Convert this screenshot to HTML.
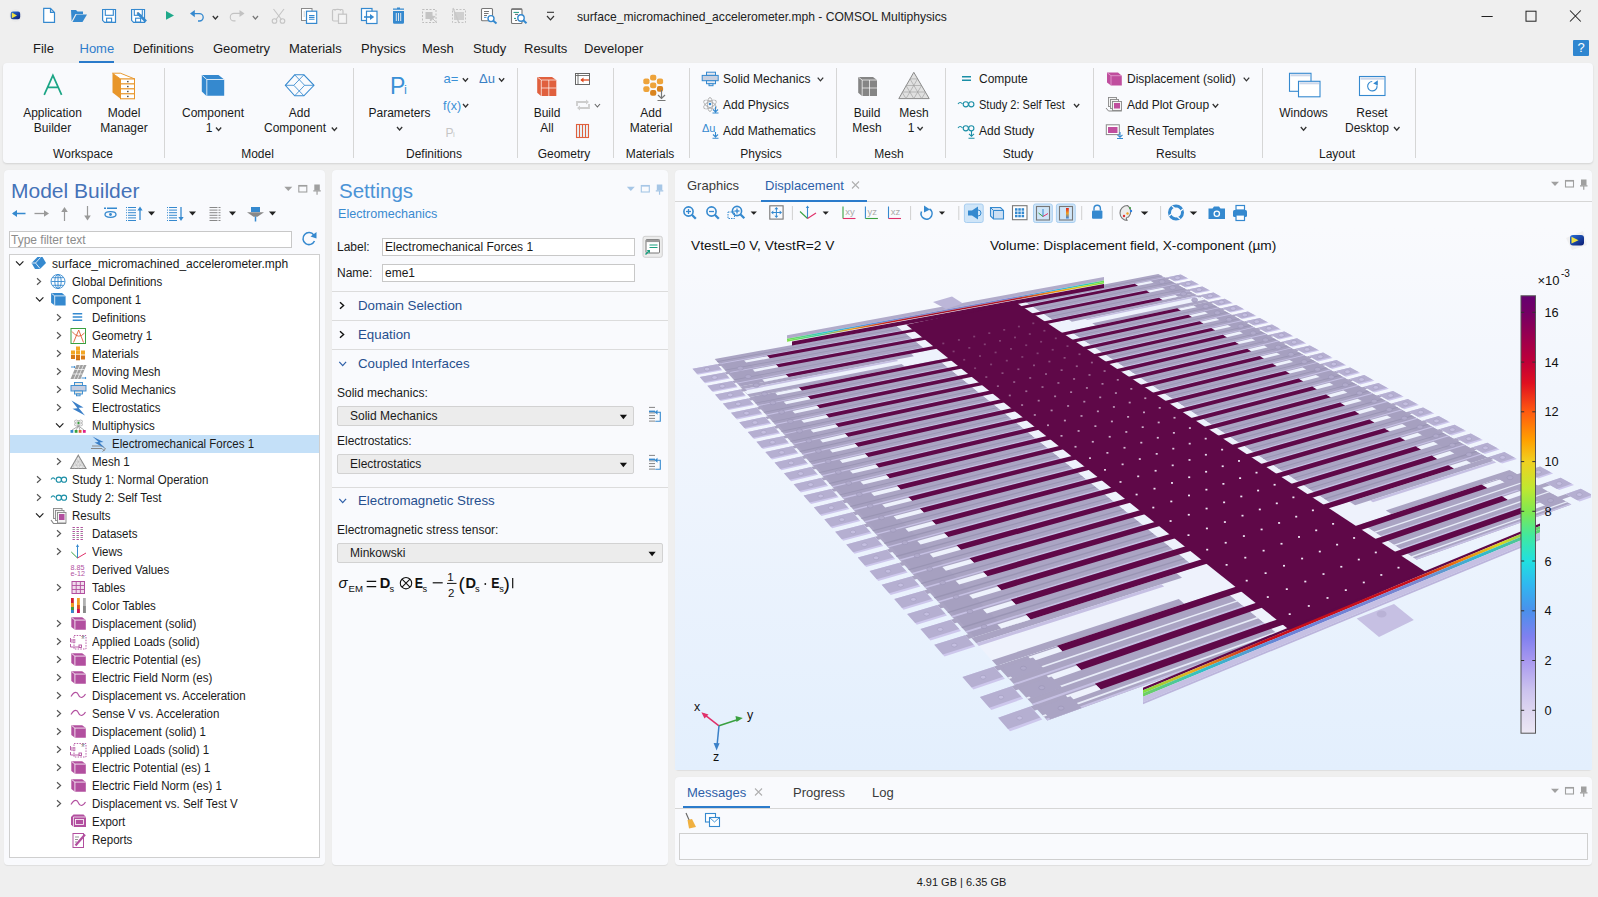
<!DOCTYPE html><html><head><meta charset="utf-8"><style>
*{margin:0;padding:0;box-sizing:border-box}
html,body{width:1598px;height:897px;overflow:hidden;background:#efefef;font-family:"Liberation Sans",sans-serif;position:relative}
.t{position:absolute;white-space:nowrap;overflow:visible}
.a{position:absolute}
.panel{position:absolute;background:#f9fafd;border-radius:4px;box-shadow:0 0.5px 1px rgba(0,0,0,0.07)}
svg{position:absolute;overflow:visible}
</style></head><body>
<div class="t" style="left:577px;top:10.76px;font-size:12.1px;line-height:12.1px;height:16.1px;color:#222;">surface_micromachined_accelerometer.mph - COMSOL Multiphysics</div>
<div class="t" style="left:33px;top:42.00px;font-size:13px;line-height:13px;height:17px;color:#1a1a1a;">File</div>
<div class="t" style="left:79.5px;top:42.00px;font-size:13px;line-height:13px;height:17px;color:#2f7dcc;">Home</div>
<div class="t" style="left:133px;top:42.00px;font-size:13px;line-height:13px;height:17px;color:#1a1a1a;">Definitions</div>
<div class="t" style="left:213px;top:42.00px;font-size:13px;line-height:13px;height:17px;color:#1a1a1a;">Geometry</div>
<div class="t" style="left:289px;top:42.00px;font-size:13px;line-height:13px;height:17px;color:#1a1a1a;">Materials</div>
<div class="t" style="left:361px;top:42.00px;font-size:13px;line-height:13px;height:17px;color:#1a1a1a;">Physics</div>
<div class="t" style="left:422px;top:42.00px;font-size:13px;line-height:13px;height:17px;color:#1a1a1a;">Mesh</div>
<div class="t" style="left:473px;top:42.00px;font-size:13px;line-height:13px;height:17px;color:#1a1a1a;">Study</div>
<div class="t" style="left:524px;top:42.00px;font-size:13px;line-height:13px;height:17px;color:#1a1a1a;">Results</div>
<div class="t" style="left:584px;top:42.00px;font-size:13px;line-height:13px;height:17px;color:#1a1a1a;">Developer</div>
<div class="a" style="left:79px;top:61px;width:35px;height:2px;background:#2b7bcb"></div>
<div class="a" style="left:1573px;top:40px;width:16px;height:16px;background:#2f86d0;border-radius:1px;color:#fff;font-size:13px;line-height:16px;text-align:center">?</div>
<div class="panel" style="left:3px;top:63px;width:1590px;height:100px;box-shadow:0 1px 2px rgba(0,0,0,0.12)"></div>
<div class="a" style="left:164px;top:68px;width:1px;height:90px;background:#d6d6d6"></div>
<div class="a" style="left:353px;top:68px;width:1px;height:90px;background:#d6d6d6"></div>
<div class="a" style="left:517px;top:68px;width:1px;height:90px;background:#d6d6d6"></div>
<div class="a" style="left:613px;top:68px;width:1px;height:90px;background:#d6d6d6"></div>
<div class="a" style="left:689px;top:68px;width:1px;height:90px;background:#d6d6d6"></div>
<div class="a" style="left:836px;top:68px;width:1px;height:90px;background:#d6d6d6"></div>
<div class="a" style="left:945px;top:68px;width:1px;height:90px;background:#d6d6d6"></div>
<div class="a" style="left:1093px;top:68px;width:1px;height:90px;background:#d6d6d6"></div>
<div class="a" style="left:1262px;top:68px;width:1px;height:90px;background:#d6d6d6"></div>
<div class="a" style="left:1415px;top:68px;width:1px;height:90px;background:#d6d6d6"></div>
<div class="t" style="left:23.0px;width:120px;text-align:center;top:147.84px;font-size:12px;line-height:12px;height:16px;color:#1a1a1a;">Workspace</div>
<div class="t" style="left:197.5px;width:120px;text-align:center;top:147.84px;font-size:12px;line-height:12px;height:16px;color:#1a1a1a;">Model</div>
<div class="t" style="left:374.0px;width:120px;text-align:center;top:147.84px;font-size:12px;line-height:12px;height:16px;color:#1a1a1a;">Definitions</div>
<div class="t" style="left:504.0px;width:120px;text-align:center;top:147.84px;font-size:12px;line-height:12px;height:16px;color:#1a1a1a;">Geometry</div>
<div class="t" style="left:590.0px;width:120px;text-align:center;top:147.84px;font-size:12px;line-height:12px;height:16px;color:#1a1a1a;">Materials</div>
<div class="t" style="left:701.0px;width:120px;text-align:center;top:147.84px;font-size:12px;line-height:12px;height:16px;color:#1a1a1a;">Physics</div>
<div class="t" style="left:829.0px;width:120px;text-align:center;top:147.84px;font-size:12px;line-height:12px;height:16px;color:#1a1a1a;">Mesh</div>
<div class="t" style="left:958.0px;width:120px;text-align:center;top:147.84px;font-size:12px;line-height:12px;height:16px;color:#1a1a1a;">Study</div>
<div class="t" style="left:1116.0px;width:120px;text-align:center;top:147.84px;font-size:12px;line-height:12px;height:16px;color:#1a1a1a;">Results</div>
<div class="t" style="left:1277.0px;width:120px;text-align:center;top:147.84px;font-size:12px;line-height:12px;height:16px;color:#1a1a1a;">Layout</div>
<div class="t" style="left:-7.5px;width:120px;text-align:center;top:106.84px;font-size:12px;line-height:12px;height:16px;color:#1a1a1a;">Application</div>
<div class="t" style="left:-7.5px;width:120px;text-align:center;top:121.84px;font-size:12px;line-height:12px;height:16px;color:#1a1a1a;">Builder</div>
<div class="t" style="left:64.0px;width:120px;text-align:center;top:106.84px;font-size:12px;line-height:12px;height:16px;color:#1a1a1a;">Model</div>
<div class="t" style="left:64.0px;width:120px;text-align:center;top:121.84px;font-size:12px;line-height:12px;height:16px;color:#1a1a1a;">Manager</div>
<div class="t" style="left:153.0px;width:120px;text-align:center;top:106.84px;font-size:12px;line-height:12px;height:16px;color:#1a1a1a;">Component</div>
<div class="t" style="left:149.0px;width:120px;text-align:center;top:121.84px;font-size:12px;line-height:12px;height:16px;color:#1a1a1a;">1</div>
<div class="t" style="left:239.5px;width:120px;text-align:center;top:106.84px;font-size:12px;line-height:12px;height:16px;color:#1a1a1a;">Add</div>
<div class="t" style="left:235.0px;width:120px;text-align:center;top:121.84px;font-size:12px;line-height:12px;height:16px;color:#1a1a1a;">Component</div>
<div class="t" style="left:339.5px;width:120px;text-align:center;top:106.84px;font-size:12px;line-height:12px;height:16px;color:#1a1a1a;">Parameters</div>
<div class="t" style="left:-60.0px;width:120px;text-align:center;top:121.84px;font-size:12px;line-height:12px;height:16px;color:#1a1a1a;"></div>
<div class="t" style="left:487.0px;width:120px;text-align:center;top:106.84px;font-size:12px;line-height:12px;height:16px;color:#1a1a1a;">Build</div>
<div class="t" style="left:487.0px;width:120px;text-align:center;top:121.84px;font-size:12px;line-height:12px;height:16px;color:#1a1a1a;">All</div>
<div class="t" style="left:591.0px;width:120px;text-align:center;top:106.84px;font-size:12px;line-height:12px;height:16px;color:#1a1a1a;">Add</div>
<div class="t" style="left:591.0px;width:120px;text-align:center;top:121.84px;font-size:12px;line-height:12px;height:16px;color:#1a1a1a;">Material</div>
<div class="t" style="left:807.0px;width:120px;text-align:center;top:106.84px;font-size:12px;line-height:12px;height:16px;color:#1a1a1a;">Build</div>
<div class="t" style="left:807.0px;width:120px;text-align:center;top:121.84px;font-size:12px;line-height:12px;height:16px;color:#1a1a1a;">Mesh</div>
<div class="t" style="left:854.0px;width:120px;text-align:center;top:106.84px;font-size:12px;line-height:12px;height:16px;color:#1a1a1a;">Mesh</div>
<div class="t" style="left:851.0px;width:120px;text-align:center;top:121.84px;font-size:12px;line-height:12px;height:16px;color:#1a1a1a;">1</div>
<div class="t" style="left:1243.5px;width:120px;text-align:center;top:106.84px;font-size:12px;line-height:12px;height:16px;color:#1a1a1a;">Windows</div>
<div class="t" style="left:-60.0px;width:120px;text-align:center;top:121.84px;font-size:12px;line-height:12px;height:16px;color:#1a1a1a;"></div>
<div class="t" style="left:1312.0px;width:120px;text-align:center;top:106.84px;font-size:12px;line-height:12px;height:16px;color:#1a1a1a;">Reset</div>
<div class="t" style="left:1307.0px;width:120px;text-align:center;top:121.84px;font-size:12px;line-height:12px;height:16px;color:#1a1a1a;">Desktop</div>
<div class="t" style="left:723px;top:73.34px;font-size:12px;line-height:12px;height:16px;color:#1a1a1a;">Solid Mechanics</div>
<div class="t" style="left:723px;top:99.34px;font-size:12px;line-height:12px;height:16px;color:#1a1a1a;">Add Physics</div>
<div class="t" style="left:723px;top:125.34px;font-size:12px;line-height:12px;height:16px;color:#1a1a1a;">Add Mathematics</div>
<div class="t" style="left:979px;top:73.34px;font-size:12px;line-height:12px;height:16px;color:#1a1a1a;">Compute</div>
<div class="t" style="left:979px;top:99.34px;font-size:12px;line-height:12px;height:16px;color:#1a1a1a;transform:scaleX(0.92);transform-origin:0 0;">Study 2: Self Test</div>
<div class="t" style="left:979px;top:125.34px;font-size:12px;line-height:12px;height:16px;color:#1a1a1a;">Add Study</div>
<div class="t" style="left:1127px;top:73.34px;font-size:12px;line-height:12px;height:16px;color:#1a1a1a;">Displacement (solid)</div>
<div class="t" style="left:1127px;top:99.34px;font-size:12px;line-height:12px;height:16px;color:#1a1a1a;">Add Plot Group</div>
<div class="t" style="left:1127px;top:125.34px;font-size:12px;line-height:12px;height:16px;color:#1a1a1a;transform:scaleX(0.95);transform-origin:0 0;">Result Templates</div>
<div class="panel" style="left:4px;top:170px;width:321px;height:695px"></div>
<div class="panel" style="left:332px;top:170px;width:336px;height:695px"></div>
<div class="panel" style="left:675px;top:170px;width:917px;height:600px"></div>
<div class="panel" style="left:675px;top:777px;width:917px;height:88px"></div>
<div class="t" style="left:11px;top:180.22px;font-size:21px;line-height:21px;height:25px;color:#4572b8;">Model Builder</div>
<div class="a" style="left:9px;top:231px;width:283px;height:17px;background:#fff;border:1px solid #c8c8c8"></div>
<div class="t" style="left:11px;top:233.84px;font-size:12px;line-height:12px;height:16px;color:#8c8c8c;">Type filter text</div>
<div class="a" style="left:9px;top:254px;width:311px;height:604px;background:#fff;border:1px solid #cfcfcf"></div>
<div class="a" style="left:10px;top:435px;width:309px;height:18px;background:#c4e0f8"></div>
<div class="t" style="left:52px;top:258.14px;font-size:12px;line-height:12px;height:16px;color:#1a1a1a;">surface_micromachined_accelerometer.mph</div>
<div class="t" style="left:72px;top:276.14px;font-size:12px;line-height:12px;height:16px;color:#1a1a1a;transform:scaleX(0.96);transform-origin:0 0;">Global Definitions</div>
<div class="t" style="left:72px;top:294.14px;font-size:12px;line-height:12px;height:16px;color:#1a1a1a;transform:scaleX(0.96);transform-origin:0 0;">Component 1</div>
<div class="t" style="left:92px;top:312.14px;font-size:12px;line-height:12px;height:16px;color:#1a1a1a;transform:scaleX(0.96);transform-origin:0 0;">Definitions</div>
<div class="t" style="left:92px;top:330.14px;font-size:12px;line-height:12px;height:16px;color:#1a1a1a;transform:scaleX(0.96);transform-origin:0 0;">Geometry 1</div>
<div class="t" style="left:92px;top:348.14px;font-size:12px;line-height:12px;height:16px;color:#1a1a1a;transform:scaleX(0.96);transform-origin:0 0;">Materials</div>
<div class="t" style="left:92px;top:366.14px;font-size:12px;line-height:12px;height:16px;color:#1a1a1a;transform:scaleX(0.96);transform-origin:0 0;">Moving Mesh</div>
<div class="t" style="left:92px;top:384.14px;font-size:12px;line-height:12px;height:16px;color:#1a1a1a;transform:scaleX(0.96);transform-origin:0 0;">Solid Mechanics</div>
<div class="t" style="left:92px;top:402.14px;font-size:12px;line-height:12px;height:16px;color:#1a1a1a;transform:scaleX(0.96);transform-origin:0 0;">Electrostatics</div>
<div class="t" style="left:92px;top:420.14px;font-size:12px;line-height:12px;height:16px;color:#1a1a1a;transform:scaleX(0.96);transform-origin:0 0;">Multiphysics</div>
<div class="t" style="left:112px;top:438.14px;font-size:12px;line-height:12px;height:16px;color:#1a1a1a;transform:scaleX(0.96);transform-origin:0 0;">Electromechanical Forces 1</div>
<div class="t" style="left:92px;top:456.14px;font-size:12px;line-height:12px;height:16px;color:#1a1a1a;transform:scaleX(0.96);transform-origin:0 0;">Mesh 1</div>
<div class="t" style="left:72px;top:474.14px;font-size:12px;line-height:12px;height:16px;color:#1a1a1a;transform:scaleX(0.96);transform-origin:0 0;">Study 1: Normal Operation</div>
<div class="t" style="left:72px;top:492.14px;font-size:12px;line-height:12px;height:16px;color:#1a1a1a;transform:scaleX(0.96);transform-origin:0 0;">Study 2: Self Test</div>
<div class="t" style="left:72px;top:510.14px;font-size:12px;line-height:12px;height:16px;color:#1a1a1a;transform:scaleX(0.96);transform-origin:0 0;">Results</div>
<div class="t" style="left:92px;top:528.14px;font-size:12px;line-height:12px;height:16px;color:#1a1a1a;transform:scaleX(0.96);transform-origin:0 0;">Datasets</div>
<div class="t" style="left:92px;top:546.14px;font-size:12px;line-height:12px;height:16px;color:#1a1a1a;transform:scaleX(0.96);transform-origin:0 0;">Views</div>
<div class="t" style="left:92px;top:564.14px;font-size:12px;line-height:12px;height:16px;color:#1a1a1a;transform:scaleX(0.96);transform-origin:0 0;">Derived Values</div>
<div class="t" style="left:92px;top:582.14px;font-size:12px;line-height:12px;height:16px;color:#1a1a1a;transform:scaleX(0.96);transform-origin:0 0;">Tables</div>
<div class="t" style="left:92px;top:600.14px;font-size:12px;line-height:12px;height:16px;color:#1a1a1a;transform:scaleX(0.96);transform-origin:0 0;">Color Tables</div>
<div class="t" style="left:92px;top:618.14px;font-size:12px;line-height:12px;height:16px;color:#1a1a1a;transform:scaleX(0.96);transform-origin:0 0;">Displacement (solid)</div>
<div class="t" style="left:92px;top:636.14px;font-size:12px;line-height:12px;height:16px;color:#1a1a1a;transform:scaleX(0.96);transform-origin:0 0;">Applied Loads (solid)</div>
<div class="t" style="left:92px;top:654.14px;font-size:12px;line-height:12px;height:16px;color:#1a1a1a;transform:scaleX(0.96);transform-origin:0 0;">Electric Potential (es)</div>
<div class="t" style="left:92px;top:672.14px;font-size:12px;line-height:12px;height:16px;color:#1a1a1a;transform:scaleX(0.96);transform-origin:0 0;">Electric Field Norm (es)</div>
<div class="t" style="left:92px;top:690.14px;font-size:12px;line-height:12px;height:16px;color:#1a1a1a;transform:scaleX(0.96);transform-origin:0 0;">Displacement vs. Acceleration</div>
<div class="t" style="left:92px;top:708.14px;font-size:12px;line-height:12px;height:16px;color:#1a1a1a;transform:scaleX(0.96);transform-origin:0 0;">Sense V vs. Acceleration</div>
<div class="t" style="left:92px;top:726.14px;font-size:12px;line-height:12px;height:16px;color:#1a1a1a;transform:scaleX(0.96);transform-origin:0 0;">Displacement (solid) 1</div>
<div class="t" style="left:92px;top:744.14px;font-size:12px;line-height:12px;height:16px;color:#1a1a1a;transform:scaleX(0.96);transform-origin:0 0;">Applied Loads (solid) 1</div>
<div class="t" style="left:92px;top:762.14px;font-size:12px;line-height:12px;height:16px;color:#1a1a1a;transform:scaleX(0.96);transform-origin:0 0;">Electric Potential (es) 1</div>
<div class="t" style="left:92px;top:780.14px;font-size:12px;line-height:12px;height:16px;color:#1a1a1a;transform:scaleX(0.96);transform-origin:0 0;">Electric Field Norm (es) 1</div>
<div class="t" style="left:92px;top:798.14px;font-size:12px;line-height:12px;height:16px;color:#1a1a1a;transform:scaleX(0.96);transform-origin:0 0;">Displacement vs. Self Test V</div>
<div class="t" style="left:92px;top:816.14px;font-size:12px;line-height:12px;height:16px;color:#1a1a1a;transform:scaleX(0.96);transform-origin:0 0;">Export</div>
<div class="t" style="left:92px;top:834.14px;font-size:12px;line-height:12px;height:16px;color:#1a1a1a;transform:scaleX(0.96);transform-origin:0 0;">Reports</div>
<div class="t" style="left:339px;top:180.65px;font-size:20.5px;line-height:20.5px;height:24.5px;color:#4b93d6;">Settings</div>
<div class="t" style="left:338px;top:207.73px;font-size:12.6px;line-height:12.6px;height:16.6px;color:#3a8ad0;">Electromechanics</div>
<div class="t" style="left:337px;top:240.84px;font-size:12px;line-height:12px;height:16px;color:#1a1a1a;">Label:</div>
<div class="t" style="left:337px;top:266.84px;font-size:12px;line-height:12px;height:16px;color:#1a1a1a;">Name:</div>
<div class="a" style="left:382px;top:238px;width:253px;height:18px;background:#fff;border:1px solid #c8c8c8"></div>
<div class="a" style="left:382px;top:264px;width:253px;height:18px;background:#fff;border:1px solid #c8c8c8"></div>
<div class="t" style="left:385px;top:240.84px;font-size:12px;line-height:12px;height:16px;color:#1a1a1a;">Electromechanical Forces 1</div>
<div class="t" style="left:385px;top:266.84px;font-size:12px;line-height:12px;height:16px;color:#1a1a1a;">eme1</div>
<div class="a" style="left:332px;top:291px;width:336px;height:1px;background:#dcdcdc"></div>
<div class="a" style="left:332px;top:320px;width:336px;height:1px;background:#dcdcdc"></div>
<div class="a" style="left:332px;top:349px;width:336px;height:1px;background:#dcdcdc"></div>
<div class="a" style="left:332px;top:487px;width:336px;height:1px;background:#dcdcdc"></div>
<div class="t" style="left:358px;top:298.74px;font-size:13.3px;line-height:13.3px;height:17.3px;color:#264f8e;">Domain Selection</div>
<div class="t" style="left:358px;top:327.74px;font-size:13.3px;line-height:13.3px;height:17.3px;color:#264f8e;">Equation</div>
<div class="t" style="left:358px;top:356.74px;font-size:13.3px;line-height:13.3px;height:17.3px;color:#264f8e;">Coupled Interfaces</div>
<div class="t" style="left:358px;top:493.74px;font-size:13.3px;line-height:13.3px;height:17.3px;color:#264f8e;">Electromagnetic Stress</div>
<div class="t" style="left:337px;top:386.84px;font-size:12px;line-height:12px;height:16px;color:#1a1a1a;">Solid mechanics:</div>
<div class="t" style="left:337px;top:434.84px;font-size:12px;line-height:12px;height:16px;color:#1a1a1a;">Electrostatics:</div>
<div class="t" style="left:337px;top:523.84px;font-size:12px;line-height:12px;height:16px;color:#1a1a1a;">Electromagnetic stress tensor:</div>
<div class="a" style="left:337px;top:406px;width:297px;height:20px;background:#ececec;border:1px solid #d2d2d2;border-radius:2px"></div>
<div class="t" style="left:350px;top:410.34px;font-size:12px;line-height:12px;height:16px;color:#1a1a1a;">Solid Mechanics</div>
<div class="a" style="left:337px;top:454px;width:297px;height:20px;background:#ececec;border:1px solid #d2d2d2;border-radius:2px"></div>
<div class="t" style="left:350px;top:458.34px;font-size:12px;line-height:12px;height:16px;color:#1a1a1a;">Electrostatics</div>
<div class="a" style="left:337px;top:543px;width:326px;height:20px;background:#ececec;border:1px solid #d2d2d2;border-radius:2px"></div>
<div class="t" style="left:350px;top:547.34px;font-size:12px;line-height:12px;height:16px;color:#1a1a1a;">Minkowski</div>
<div class="t" style="left:687px;top:179.00px;font-size:13px;line-height:13px;height:17px;color:#3a3a3a;">Graphics</div>
<div class="t" style="left:765px;top:179.00px;font-size:13px;line-height:13px;height:17px;color:#2e5fa8;">Displacement</div>
<div class="a" style="left:675px;top:201px;width:917px;height:1px;background:#d6d6d6"></div>
<div class="a" style="left:761px;top:200px;width:106px;height:2px;background:#2b7bcb"></div>
<div class="a" style="left:675px;top:227px;width:917px;height:543px;background:linear-gradient(#f9fafd,#f2f6fd 30%,#e3effd)"></div>
<svg style="left:0;top:0" width="1598" height="897"><defs><clipPath id="gc"><rect x="676" y="227" width="915" height="543"/></clipPath></defs><g clip-path="url(#gc)"><polygon points="896.7,326.1 714.7,358.9 971.5,638.0 1195.4,567.4" fill="#aaa4c3"/>
<polygon points="1224.1,590.6 996.9,665.7 1047.4,720.5 1280.7,636.2" fill="#aaa4c3"/>
<polygon points="744.9,358.4 721.1,362.8 980.8,643.9 1010.8,634.3" fill="#a6a0c0"/>
<polygon points="899.3,328.2 716.9,361.3 717.5,361.9 900.0,328.8" fill="#9a95b4"/>
<polygon points="901.8,330.2 719.0,363.5 719.7,364.3 902.6,330.9" fill="#c6c0e3"/>
<polygon points="906.0,324.4 896.7,326.1 902.6,330.9 911.9,329.2" fill="#eef2fc"/>
<polygon points="908.7,335.8 724.8,369.8 725.4,370.5 909.4,336.4" fill="#9a95b4"/>
<polygon points="911.7,338.2 727.3,372.6 728.0,373.3 912.5,338.9" fill="#c6c0e3"/>
<polygon points="915.0,331.6 905.6,333.3 912.5,338.9 922.0,337.1" fill="#eef2fc"/>
<polygon points="919.3,344.4 733.7,379.5 734.3,380.2 920.0,345.0" fill="#9a95b4"/>
<polygon points="922.8,347.2 736.7,382.7 737.4,383.5 923.7,347.9" fill="#c6c0e3"/>
<polygon points="925.1,339.7 915.7,341.4 923.7,347.9 933.2,346.1" fill="#eef2fc"/>
<polygon points="936.4,348.7 740.1,386.5 749.9,397.1 948.2,358.0" fill="#eef2fc"/>
<polygon points="910.8,353.6 740.1,386.5 742.7,389.3 913.9,356.2" fill="#aaa4c3"/>
<polygon points="896.5,359.5 742.7,389.3 744.1,390.8 898.1,360.9" fill="#c6c0e3"/>
<polygon points="901.6,363.9 747.2,394.2 749.9,397.1 904.8,366.6" fill="#aaa4c3"/>
<polygon points="944.7,364.9 755.1,402.8 755.7,403.5 945.5,365.5" fill="#9a95b4"/>
<polygon points="947.5,367.1 757.4,405.3 758.2,406.1 948.4,367.9" fill="#c6c0e3"/>
<polygon points="951.5,360.7 941.8,362.6 948.4,367.9 958.1,365.9" fill="#eef2fc"/>
<polygon points="954.7,373.0 763.5,411.9 764.2,412.7 955.5,373.6" fill="#9a95b4"/>
<polygon points="957.5,375.3 765.9,414.6 766.7,415.4 958.5,376.0" fill="#c6c0e3"/>
<polygon points="961.5,368.6 951.8,370.6 958.5,376.0 968.2,374.0" fill="#eef2fc"/>
<polygon points="964.9,381.2 772.2,421.4 772.9,422.1 965.8,381.9" fill="#9a95b4"/>
<polygon points="967.8,383.6 774.6,424.0 775.4,424.9 968.8,384.3" fill="#c6c0e3"/>
<polygon points="971.7,376.8 961.9,378.8 968.8,384.3 978.6,382.3" fill="#eef2fc"/>
<polygon points="975.4,389.7 781.0,431.0 781.8,431.8 976.2,390.4" fill="#9a95b4"/>
<polygon points="978.4,392.1 783.6,433.7 784.4,434.6 979.3,392.9" fill="#c6c0e3"/>
<polygon points="982.2,385.1 972.3,387.2 979.3,392.9 989.2,390.7" fill="#eef2fc"/>
<polygon points="986.1,398.3 790.1,440.9 790.9,441.7 987.0,399.0" fill="#9a95b4"/>
<polygon points="989.2,400.8 792.7,443.7 793.6,444.6 990.1,401.6" fill="#c6c0e3"/>
<polygon points="992.9,393.7 983.0,395.8 990.1,401.6 1000.1,399.4" fill="#eef2fc"/>
<polygon points="997.1,407.2 799.5,451.0 800.2,451.9 998.0,407.9" fill="#9a95b4"/>
<polygon points="1000.2,409.7 802.1,453.9 803.0,454.9 1001.2,410.5" fill="#c6c0e3"/>
<polygon points="1003.9,402.4 993.9,404.6 1001.2,410.5 1011.3,408.3" fill="#eef2fc"/>
<polygon points="1008.3,416.3 809.1,461.5 809.8,462.3 1009.2,417.0" fill="#9a95b4"/>
<polygon points="1011.5,418.8 811.8,464.4 812.7,465.4 1012.5,419.7" fill="#c6c0e3"/>
<polygon points="1015.1,411.3 1005.0,413.6 1012.5,419.7 1022.7,417.4" fill="#eef2fc"/>
<polygon points="1019.8,425.6 818.9,472.2 819.7,473.0 1020.8,426.3" fill="#9a95b4"/>
<polygon points="1023.1,428.2 821.7,475.2 822.6,476.2 1024.2,429.1" fill="#c6c0e3"/>
<polygon points="1026.6,420.5 1016.5,422.8 1024.2,429.1 1034.4,426.7" fill="#eef2fc"/>
<polygon points="1031.6,435.1 829.0,483.1 829.8,484.0 1032.6,435.9" fill="#9a95b4"/>
<polygon points="1035.0,437.8 831.9,486.3 832.8,487.3 1036.1,438.7" fill="#c6c0e3"/>
<polygon points="1038.4,429.9 1028.2,432.3 1036.1,438.7 1046.4,436.2" fill="#eef2fc"/>
<polygon points="1043.7,444.9 839.4,494.4 840.2,495.3 1044.7,445.7" fill="#9a95b4"/>
<polygon points="1047.2,447.6 842.3,497.6 843.3,498.7 1048.3,448.5" fill="#c6c0e3"/>
<polygon points="1050.5,439.5 1040.2,442.0 1048.3,448.5 1058.6,446.0" fill="#eef2fc"/>
<polygon points="1056.1,454.9 850.1,506.0 850.9,507.0 1057.2,455.7" fill="#9a95b4"/>
<polygon points="1059.7,457.7 853.1,509.3 854.1,510.4 1060.8,458.7" fill="#c6c0e3"/>
<polygon points="1062.9,449.4 1052.5,452.0 1060.8,458.7 1071.3,456.0" fill="#eef2fc"/>
<polygon points="1068.9,465.2 861.0,517.9 861.9,518.9 1069.9,466.0" fill="#9a95b4"/>
<polygon points="1072.5,468.1 864.2,521.3 865.2,522.4 1073.7,469.0" fill="#c6c0e3"/>
<polygon points="1075.6,459.5 1065.1,462.2 1073.7,469.0 1084.2,466.3" fill="#eef2fc"/>
<polygon points="1081.9,475.7 872.3,530.2 873.2,531.2 1083.0,476.6" fill="#9a95b4"/>
<polygon points="1085.7,478.7 875.5,533.7 876.6,534.8 1086.9,479.7" fill="#c6c0e3"/>
<polygon points="1088.6,469.9 1078.1,472.6 1086.9,479.7 1097.4,476.9" fill="#eef2fc"/>
<polygon points="1095.3,486.5 883.9,542.8 884.9,543.9 1096.4,487.4" fill="#9a95b4"/>
<polygon points="1099.2,489.6 887.2,546.4 888.3,547.6 1100.4,490.6" fill="#c6c0e3"/>
<polygon points="1102.0,480.6 1091.4,483.4 1100.4,490.6 1111.1,487.8" fill="#eef2fc"/>
<polygon points="1109.1,497.7 895.9,555.8 896.8,556.9 1110.2,498.6" fill="#9a95b4"/>
<polygon points="1113.0,500.8 899.3,559.5 900.4,560.7 1114.3,501.9" fill="#c6c0e3"/>
<polygon points="1115.8,491.5 1105.1,494.4 1114.3,501.9 1125.0,498.9" fill="#eef2fc"/>
<polygon points="1123.3,509.1 908.2,569.2 909.2,570.3 1124.4,510.0" fill="#9a95b4"/>
<polygon points="1127.3,512.3 911.7,573.0 912.8,574.3 1128.6,513.4" fill="#c6c0e3"/>
<polygon points="1129.9,502.8 1119.1,505.7 1128.6,513.4 1139.4,510.3" fill="#eef2fc"/>
<polygon points="1137.8,520.8 920.9,583.0 921.9,584.1 1139.0,521.8" fill="#9a95b4"/>
<polygon points="1141.9,524.2 924.5,586.9 925.7,588.2 1143.3,525.3" fill="#c6c0e3"/>
<polygon points="1144.4,514.3 1133.5,517.4 1143.3,525.3 1154.2,522.1" fill="#eef2fc"/>
<polygon points="1152.7,532.9 933.9,597.2 935.0,598.4 1154.0,533.9" fill="#9a95b4"/>
<polygon points="1157.0,536.3 937.7,601.3 938.9,602.6 1158.4,537.4" fill="#c6c0e3"/>
<polygon points="1159.3,526.2 1148.4,529.4 1158.4,537.4 1169.4,534.2" fill="#eef2fc"/>
<polygon points="1168.1,545.3 947.4,611.9 948.5,613.1 1169.4,546.3" fill="#9a95b4"/>
<polygon points="1172.5,548.8 951.3,616.1 952.5,617.4 1173.9,550.0" fill="#c6c0e3"/>
<polygon points="1174.6,538.4 1163.6,541.7 1173.9,550.0 1185.0,546.6" fill="#eef2fc"/>
<polygon points="1183.9,558.1 961.3,627.0 962.5,628.2 1185.2,559.1" fill="#9a95b4"/>
<polygon points="1188.4,561.7 965.3,631.3 966.6,632.7 1189.9,562.9" fill="#c6c0e3"/>
<polygon points="1190.4,550.9 1179.3,554.3 1189.9,562.9 1201.0,559.4" fill="#eef2fc"/>
<polygon points="1206.6,563.8 971.5,638.0 996.9,665.7 1235.4,586.8" fill="#eef2fc"/>
<polygon points="1176.6,573.3 971.5,638.0 976.3,643.2 1182.0,577.8" fill="#aaa4c3"/>
<polygon points="1161.4,584.3 976.3,643.2 978.8,645.9 1164.2,586.6" fill="#c6c0e3"/>
<polygon points="1178.8,599.0 991.9,660.2 996.9,665.7 1184.3,603.7" fill="#aaa4c3"/>
<polygon points="1236.4,600.5 1007.8,677.5 1009.1,678.9 1237.8,601.6" fill="#e8ecf8"/>
<polygon points="1242.7,605.5 1013.4,683.6 1014.8,685.1 1244.3,606.8" fill="#c6c0e3"/>
<polygon points="1241.4,591.5 1230.0,595.3 1244.3,606.8 1255.7,602.9" fill="#eef2fc"/>
<polygon points="1257.0,617.1 1026.2,697.5 1027.5,698.9 1258.5,618.3" fill="#e8ecf8"/>
<polygon points="1263.5,622.3 1032.0,703.8 1033.5,705.4 1265.2,623.7" fill="#c6c0e3"/>
<polygon points="1261.8,607.8 1250.4,611.8 1265.2,623.7 1276.6,619.6" fill="#eef2fc"/>
<polygon points="1275.3,631.9 1042.5,715.3 1043.9,716.7 1276.8,633.1" fill="#e8ecf8"/>
<polygon points="1279.0,634.9 1045.8,718.8 1047.4,720.5 1280.7,636.2" fill="#c6c0e3"/>
<polygon points="1283.0,624.7 1271.5,628.8 1280.7,636.2 1292.2,632.1" fill="#eef2fc"/>
<polygon points="916.1,328.4 767.0,355.6 769.7,358.3 919.2,330.8" fill="#5f0848"/>
<polygon points="767.6,356.2 744.1,360.5 746.2,362.6 769.7,358.3" fill="#eef2fc"/>
<polygon points="926.1,336.4 775.8,364.4 778.6,367.2 929.3,338.9" fill="#5f0848"/>
<polygon points="776.4,365.0 752.7,369.4 754.8,371.7 778.6,367.2" fill="#eef2fc"/>
<polygon points="937.4,345.3 785.7,374.3 788.5,377.1 940.7,347.9" fill="#5f0848"/>
<polygon points="786.2,374.9 762.3,379.5 764.5,381.8 788.5,377.1" fill="#eef2fc"/>
<polygon points="952.4,357.2 798.8,387.4 801.8,390.4 955.8,359.8" fill="#5f0848"/>
<polygon points="799.4,388.1 775.2,392.8 777.4,395.2 801.8,390.4" fill="#eef2fc"/>
<polygon points="962.4,365.0 807.6,396.2 810.6,399.2 965.8,367.8" fill="#5f0848"/>
<polygon points="808.2,396.8 783.7,401.8 786.1,404.2 810.6,399.2" fill="#eef2fc"/>
<polygon points="972.5,373.1 816.5,405.2 819.6,408.3 976.1,375.9" fill="#5f0848"/>
<polygon points="817.2,405.8 792.5,410.9 794.9,413.4 819.6,408.3" fill="#eef2fc"/>
<polygon points="983.0,381.4 825.7,414.3 828.9,417.5 986.6,384.2" fill="#5f0848"/>
<polygon points="826.3,415.0 801.4,420.2 803.9,422.8 828.9,417.5" fill="#eef2fc"/>
<polygon points="993.6,389.8 835.1,423.8 838.4,427.0 997.3,392.7" fill="#5f0848"/>
<polygon points="835.8,424.4 810.6,429.8 813.2,432.5 838.4,427.0" fill="#eef2fc"/>
<polygon points="1004.5,398.4 844.7,433.4 848.1,436.7 1008.3,401.4" fill="#5f0848"/>
<polygon points="845.4,434.1 820.1,439.7 822.7,442.4 848.1,436.7" fill="#eef2fc"/>
<polygon points="1015.7,407.3 854.6,443.3 858.1,446.7 1019.6,410.3" fill="#5f0848"/>
<polygon points="855.3,444.0 829.8,449.7 832.4,452.5 858.1,446.7" fill="#eef2fc"/>
<polygon points="1027.2,416.3 864.8,453.5 868.3,457.0 1031.1,419.5" fill="#5f0848"/>
<polygon points="865.5,454.2 839.7,460.1 842.4,462.9 868.3,457.0" fill="#eef2fc"/>
<polygon points="1038.9,425.6 875.2,463.9 878.8,467.5 1042.9,428.8" fill="#5f0848"/>
<polygon points="875.9,464.6 849.9,470.7 852.7,473.6 878.8,467.5" fill="#eef2fc"/>
<polygon points="1050.9,435.1 885.9,474.6 889.6,478.3 1055.1,438.4" fill="#5f0848"/>
<polygon points="886.7,475.3 860.4,481.6 863.3,484.6 889.6,478.3" fill="#eef2fc"/>
<polygon points="1063.2,444.9 896.9,485.6 900.7,489.4 1067.5,448.3" fill="#5f0848"/>
<polygon points="897.7,486.4 871.1,492.8 874.1,495.9 900.7,489.4" fill="#eef2fc"/>
<polygon points="1075.9,454.9 908.2,496.9 912.1,500.8 1080.2,458.4" fill="#5f0848"/>
<polygon points="909.0,497.7 882.2,504.4 885.2,507.5 912.1,500.8" fill="#eef2fc"/>
<polygon points="1088.8,465.2 919.8,508.5 923.8,512.5 1093.3,468.7" fill="#5f0848"/>
<polygon points="920.6,509.3 893.6,516.2 896.7,519.5 923.8,512.5" fill="#eef2fc"/>
<polygon points="1102.1,475.7 931.7,520.4 935.8,524.5 1106.7,479.3" fill="#5f0848"/>
<polygon points="932.5,521.2 905.3,528.4 908.5,531.7 935.8,524.5" fill="#eef2fc"/>
<polygon points="1115.8,486.5 943.9,532.7 948.2,536.9 1120.5,490.2" fill="#5f0848"/>
<polygon points="944.8,533.5 917.3,540.9 920.6,544.4 948.2,536.9" fill="#eef2fc"/>
<polygon points="1129.8,497.6 956.5,545.3 960.9,549.7 1134.6,501.4" fill="#5f0848"/>
<polygon points="957.4,546.2 929.7,553.8 933.1,557.4 960.9,549.7" fill="#eef2fc"/>
<polygon points="1144.2,509.0 969.5,558.3 974.0,562.8 1149.2,512.9" fill="#5f0848"/>
<polygon points="970.5,559.2 942.4,567.1 945.9,570.8 974.0,562.8" fill="#eef2fc"/>
<polygon points="1159.0,520.7 982.9,571.7 987.5,576.3 1164.1,524.8" fill="#5f0848"/>
<polygon points="983.8,572.6 955.6,580.8 959.2,584.6 987.5,576.3" fill="#eef2fc"/>
<polygon points="1174.2,532.8 996.7,585.4 1001.5,590.2 1179.5,536.9" fill="#5f0848"/>
<polygon points="997.7,586.4 969.1,594.9 972.8,598.8 1001.5,590.2" fill="#eef2fc"/>
<polygon points="1189.8,545.1 1010.9,599.6 1015.8,604.6 1195.3,549.4" fill="#5f0848"/>
<polygon points="1011.9,600.7 983.0,609.5 986.9,613.5 1015.8,604.6" fill="#eef2fc"/>
<polygon points="1205.9,557.9 1025.5,614.3 1030.6,619.4 1211.5,562.3" fill="#5f0848"/>
<polygon points="1026.6,615.3 997.4,624.5 1001.4,628.6 1030.6,619.4" fill="#eef2fc"/>
<polygon points="1240.4,585.2 1057.0,645.8 1062.4,651.2 1246.3,589.9" fill="#5f0848"/>
<polygon points="1058.1,646.9 1028.4,656.7 1032.7,661.2 1062.4,651.2" fill="#eef2fc"/>
<polygon points="1260.7,601.2 1075.6,664.4 1081.2,670.0 1266.8,606.1" fill="#5f0848"/>
<polygon points="1076.7,665.6 1046.7,675.8 1051.1,680.4 1081.2,670.0" fill="#eef2fc"/>
<polygon points="1281.7,617.9 1094.9,683.7 1100.8,689.6 1288.0,622.9" fill="#5f0848"/>
<polygon points="1096.1,684.9 1065.8,695.6 1070.3,700.4 1100.8,689.6" fill="#eef2fc"/>
<polygon points="1033.0,657.4 1002.6,667.5 1012.7,678.4 1043.3,668.1" fill="#aaa4c4"/>
<polygon points="1051.4,676.5 1020.7,687.0 1031.2,698.4 1062.1,687.6" fill="#aaa4c4"/>
<polygon points="1070.5,696.3 1039.4,707.3 1050.4,719.2 1081.7,707.9" fill="#aaa4c4"/>
<ellipse cx="740.3" cy="368.3" rx="3.0" ry="2.0" fill="#b0aacb" stroke="#9791b2" stroke-width="0.5"/>
<ellipse cx="748.2" cy="376.6" rx="3.0" ry="2.0" fill="#b0aacb" stroke="#9791b2" stroke-width="0.5"/>
<ellipse cx="756.3" cy="385.2" rx="3.0" ry="2.0" fill="#b0aacb" stroke="#9791b2" stroke-width="0.5"/>
<ellipse cx="764.5" cy="393.9" rx="3.0" ry="2.0" fill="#b0aacb" stroke="#9791b2" stroke-width="0.5"/>
<ellipse cx="772.9" cy="402.8" rx="3.0" ry="2.0" fill="#b0aacb" stroke="#9791b2" stroke-width="0.5"/>
<ellipse cx="781.6" cy="412.0" rx="3.0" ry="2.0" fill="#b0aacb" stroke="#9791b2" stroke-width="0.5"/>
<ellipse cx="790.4" cy="421.4" rx="3.0" ry="2.0" fill="#b0aacb" stroke="#9791b2" stroke-width="0.5"/>
<ellipse cx="799.5" cy="431.0" rx="3.0" ry="2.0" fill="#b0aacb" stroke="#9791b2" stroke-width="0.5"/>
<ellipse cx="808.9" cy="440.9" rx="3.0" ry="2.0" fill="#b0aacb" stroke="#9791b2" stroke-width="0.5"/>
<ellipse cx="818.4" cy="451.0" rx="3.0" ry="2.0" fill="#b0aacb" stroke="#9791b2" stroke-width="0.5"/>
<ellipse cx="828.2" cy="461.4" rx="3.0" ry="2.0" fill="#b0aacb" stroke="#9791b2" stroke-width="0.5"/>
<ellipse cx="838.3" cy="472.1" rx="3.0" ry="2.0" fill="#b0aacb" stroke="#9791b2" stroke-width="0.5"/>
<ellipse cx="848.7" cy="483.1" rx="3.0" ry="2.0" fill="#b0aacb" stroke="#9791b2" stroke-width="0.5"/>
<ellipse cx="859.3" cy="494.3" rx="3.0" ry="2.0" fill="#b0aacb" stroke="#9791b2" stroke-width="0.5"/>
<ellipse cx="870.2" cy="505.9" rx="3.0" ry="2.0" fill="#b0aacb" stroke="#9791b2" stroke-width="0.5"/>
<ellipse cx="881.5" cy="517.8" rx="3.0" ry="2.0" fill="#b0aacb" stroke="#9791b2" stroke-width="0.5"/>
<ellipse cx="893.0" cy="530.1" rx="3.0" ry="2.0" fill="#b0aacb" stroke="#9791b2" stroke-width="0.5"/>
<ellipse cx="904.9" cy="542.7" rx="3.0" ry="2.0" fill="#b0aacb" stroke="#9791b2" stroke-width="0.5"/>
<ellipse cx="917.1" cy="555.6" rx="3.0" ry="2.0" fill="#b0aacb" stroke="#9791b2" stroke-width="0.5"/>
<ellipse cx="929.7" cy="569.0" rx="3.0" ry="2.0" fill="#b0aacb" stroke="#9791b2" stroke-width="0.5"/>
<ellipse cx="942.7" cy="582.7" rx="3.0" ry="2.0" fill="#b0aacb" stroke="#9791b2" stroke-width="0.5"/>
<ellipse cx="956.1" cy="596.9" rx="3.0" ry="2.0" fill="#b0aacb" stroke="#9791b2" stroke-width="0.5"/>
<ellipse cx="969.9" cy="611.5" rx="3.0" ry="2.0" fill="#b0aacb" stroke="#9791b2" stroke-width="0.5"/>
<ellipse cx="984.1" cy="626.6" rx="3.0" ry="2.0" fill="#b0aacb" stroke="#9791b2" stroke-width="0.5"/>
<ellipse cx="1023.4" cy="668.2" rx="3.0" ry="2.0" fill="#b0aacb" stroke="#9791b2" stroke-width="0.5"/>
<ellipse cx="1041.8" cy="687.7" rx="3.0" ry="2.0" fill="#b0aacb" stroke="#9791b2" stroke-width="0.5"/>
<ellipse cx="1061.0" cy="708.1" rx="3.0" ry="2.0" fill="#b0aacb" stroke="#9791b2" stroke-width="0.5"/>
<polygon points="721.7,363.4 716.9,364.3 718.7,366.3 723.5,365.4" fill="#aaa4c3"/>
<polygon points="716.9,364.3 692.5,368.7 697.8,374.8 722.3,370.2" fill="#cdc7ec"/>
<polygon points="716.9,364.3 692.5,368.7 696.9,373.7 721.4,369.2" fill="#b5afd1"/>
<ellipse cx="707.1" cy="369.1" rx="2.8" ry="1.9" fill="#c4bee0" stroke="#a39dbf" stroke-width="0.6"/>
<polygon points="729.3,371.6 724.4,372.5 726.3,374.6 731.1,373.6" fill="#aaa4c3"/>
<polygon points="724.4,372.5 699.8,377.1 705.2,383.3 730.0,378.6" fill="#cdc7ec"/>
<polygon points="724.4,372.5 699.8,377.1 704.3,382.2 729.0,377.6" fill="#b5afd1"/>
<ellipse cx="714.6" cy="377.5" rx="2.8" ry="1.9" fill="#c4bee0" stroke="#a39dbf" stroke-width="0.6"/>
<polygon points="737.1,380.1 732.2,381.0 734.0,383.0 739.0,382.1" fill="#aaa4c3"/>
<polygon points="732.2,381.0 707.4,385.7 712.9,392.0 737.8,387.2" fill="#cdc7ec"/>
<polygon points="732.2,381.0 707.4,385.7 712.0,390.9 736.9,386.2" fill="#b5afd1"/>
<ellipse cx="722.3" cy="386.1" rx="2.8" ry="1.9" fill="#c4bee0" stroke="#a39dbf" stroke-width="0.6"/>
<polygon points="745.0,388.7 740.1,389.6 742.0,391.7 747.0,390.8" fill="#aaa4c3"/>
<polygon points="740.1,389.6 715.1,394.5 720.7,400.9 745.9,396.0" fill="#cdc7ec"/>
<polygon points="740.1,389.6 715.1,394.5 719.8,399.9 744.9,394.9" fill="#b5afd1"/>
<ellipse cx="730.2" cy="394.9" rx="2.8" ry="1.9" fill="#c4bee0" stroke="#a39dbf" stroke-width="0.6"/>
<polygon points="753.2,397.5 748.2,398.5 750.2,400.6 755.2,399.7" fill="#aaa4c3"/>
<polygon points="748.2,398.5 722.9,403.5 728.7,410.1 754.1,405.0" fill="#cdc7ec"/>
<polygon points="748.2,398.5 722.9,403.5 727.8,409.0 753.1,403.9" fill="#b5afd1"/>
<ellipse cx="738.2" cy="403.9" rx="2.8" ry="1.9" fill="#c4bee0" stroke="#a39dbf" stroke-width="0.6"/>
<polygon points="761.5,406.5 756.5,407.6 758.5,409.8 763.6,408.8" fill="#aaa4c3"/>
<polygon points="756.5,407.6 731.0,412.7 737.0,419.5 762.6,414.2" fill="#cdc7ec"/>
<polygon points="756.5,407.6 731.0,412.7 736.0,418.3 761.6,413.1" fill="#b5afd1"/>
<ellipse cx="746.5" cy="413.1" rx="2.8" ry="1.9" fill="#c4bee0" stroke="#a39dbf" stroke-width="0.6"/>
<polygon points="770.1,415.8 765.0,416.9 767.1,419.1 772.2,418.1" fill="#aaa4c3"/>
<polygon points="765.0,416.9 739.3,422.2 745.4,429.1 771.3,423.7" fill="#cdc7ec"/>
<polygon points="765.0,416.9 739.3,422.2 744.4,427.9 770.2,422.6" fill="#b5afd1"/>
<ellipse cx="755.0" cy="422.5" rx="2.8" ry="1.9" fill="#c4bee0" stroke="#a39dbf" stroke-width="0.6"/>
<polygon points="778.9,425.3 773.7,426.4 775.9,428.7 781.0,427.6" fill="#aaa4c3"/>
<polygon points="773.7,426.4 747.8,431.9 754.0,439.0 780.2,433.4" fill="#cdc7ec"/>
<polygon points="773.7,426.4 747.8,431.9 753.0,437.8 779.1,432.2" fill="#b5afd1"/>
<ellipse cx="763.6" cy="432.2" rx="2.8" ry="1.9" fill="#c4bee0" stroke="#a39dbf" stroke-width="0.6"/>
<polygon points="787.9,435.1 782.7,436.2 784.9,438.6 790.1,437.4" fill="#aaa4c3"/>
<polygon points="782.7,436.2 756.5,441.8 762.9,449.1 789.3,443.4" fill="#cdc7ec"/>
<polygon points="782.7,436.2 756.5,441.8 761.8,447.9 788.2,442.2" fill="#b5afd1"/>
<ellipse cx="772.5" cy="442.2" rx="2.8" ry="1.9" fill="#c4bee0" stroke="#a39dbf" stroke-width="0.6"/>
<polygon points="797.1,445.1 791.9,446.2 794.1,448.6 799.4,447.5" fill="#aaa4c3"/>
<polygon points="791.9,446.2 765.4,452.0 772.0,459.5 798.6,453.6" fill="#cdc7ec"/>
<polygon points="791.9,446.2 765.4,452.0 770.9,458.3 797.5,452.3" fill="#b5afd1"/>
<ellipse cx="781.7" cy="452.4" rx="2.8" ry="1.9" fill="#c4bee0" stroke="#a39dbf" stroke-width="0.6"/>
<polygon points="806.6,455.3 801.3,456.5 803.6,459.0 808.9,457.8" fill="#aaa4c3"/>
<polygon points="801.3,456.5 774.6,462.5 781.4,470.2 808.3,464.1" fill="#cdc7ec"/>
<polygon points="801.3,456.5 774.6,462.5 780.2,468.9 807.1,462.8" fill="#b5afd1"/>
<ellipse cx="791.1" cy="462.9" rx="2.8" ry="1.9" fill="#c4bee0" stroke="#a39dbf" stroke-width="0.6"/>
<polygon points="816.3,465.8 811.0,467.1 813.3,469.6 818.7,468.4" fill="#aaa4c3"/>
<polygon points="811.0,467.1 784.0,473.2 791.0,481.2 818.1,474.8" fill="#cdc7ec"/>
<polygon points="811.0,467.1 784.0,473.2 789.8,479.8 816.9,473.5" fill="#b5afd1"/>
<ellipse cx="800.7" cy="473.6" rx="2.8" ry="1.9" fill="#c4bee0" stroke="#a39dbf" stroke-width="0.6"/>
<polygon points="826.3,476.6 820.9,477.9 823.4,480.6 828.7,479.3" fill="#aaa4c3"/>
<polygon points="820.9,477.9 793.7,484.3 800.8,492.4 828.2,485.9" fill="#cdc7ec"/>
<polygon points="820.9,477.9 793.7,484.3 799.6,491.1 827.0,484.6" fill="#b5afd1"/>
<ellipse cx="810.6" cy="484.6" rx="2.8" ry="1.9" fill="#c4bee0" stroke="#a39dbf" stroke-width="0.6"/>
<polygon points="836.6,487.8 831.1,489.1 833.6,491.8 839.1,490.5" fill="#aaa4c3"/>
<polygon points="831.1,489.1 803.6,495.6 811.0,504.0 838.7,497.3" fill="#cdc7ec"/>
<polygon points="831.1,489.1 803.6,495.6 809.7,502.6 837.4,495.9" fill="#b5afd1"/>
<ellipse cx="820.7" cy="496.0" rx="2.8" ry="1.9" fill="#c4bee0" stroke="#a39dbf" stroke-width="0.6"/>
<polygon points="847.1,499.2 841.6,500.5 844.2,503.3 849.7,501.9" fill="#aaa4c3"/>
<polygon points="841.6,500.5 813.9,507.3 821.4,515.9 849.4,508.9" fill="#cdc7ec"/>
<polygon points="841.6,500.5 813.9,507.3 820.1,514.5 848.1,507.5" fill="#b5afd1"/>
<ellipse cx="831.2" cy="507.7" rx="2.8" ry="1.9" fill="#c4bee0" stroke="#a39dbf" stroke-width="0.6"/>
<polygon points="857.9,510.9 852.4,512.3 855.0,515.2 860.6,513.8" fill="#aaa4c3"/>
<polygon points="852.4,512.3 824.4,519.3 832.1,528.2 860.4,521.0" fill="#cdc7ec"/>
<polygon points="852.4,512.3 824.4,519.3 830.8,526.7 859.0,519.5" fill="#b5afd1"/>
<ellipse cx="841.9" cy="519.6" rx="2.8" ry="1.9" fill="#c4bee0" stroke="#a39dbf" stroke-width="0.6"/>
<polygon points="869.1,523.0 863.5,524.4 866.2,527.3 871.8,525.9" fill="#aaa4c3"/>
<polygon points="863.5,524.4 835.2,531.7 843.2,540.8 871.7,533.3" fill="#cdc7ec"/>
<polygon points="863.5,524.4 835.2,531.7 841.8,539.2 870.3,531.8" fill="#b5afd1"/>
<ellipse cx="853.0" cy="532.0" rx="2.8" ry="1.9" fill="#c4bee0" stroke="#a39dbf" stroke-width="0.6"/>
<polygon points="880.5,535.4 874.9,536.8 877.7,539.9 883.3,538.4" fill="#aaa4c3"/>
<polygon points="874.9,536.8 846.3,544.4 854.5,553.7 883.3,546.0" fill="#cdc7ec"/>
<polygon points="874.9,536.8 846.3,544.4 853.2,552.2 881.9,544.5" fill="#b5afd1"/>
<ellipse cx="864.4" cy="544.7" rx="2.8" ry="1.9" fill="#c4bee0" stroke="#a39dbf" stroke-width="0.6"/>
<polygon points="892.3,548.1 886.6,549.7 889.5,552.8 895.2,551.2" fill="#aaa4c3"/>
<polygon points="886.6,549.7 857.8,557.4 866.2,567.1 895.3,559.1" fill="#cdc7ec"/>
<polygon points="886.6,549.7 857.8,557.4 864.8,565.5 893.9,557.5" fill="#b5afd1"/>
<ellipse cx="876.1" cy="557.8" rx="2.8" ry="1.9" fill="#c4bee0" stroke="#a39dbf" stroke-width="0.6"/>
<polygon points="904.5,561.3 898.7,562.9 901.7,566.1 907.5,564.5" fill="#aaa4c3"/>
<polygon points="898.7,562.9 869.6,570.9 878.3,580.9 907.7,572.6" fill="#cdc7ec"/>
<polygon points="898.7,562.9 869.6,570.9 876.8,579.2 906.2,571.0" fill="#b5afd1"/>
<ellipse cx="888.1" cy="571.2" rx="2.8" ry="1.9" fill="#c4bee0" stroke="#a39dbf" stroke-width="0.6"/>
<polygon points="917.0,574.8 911.2,576.5 914.2,579.8 920.1,578.1" fill="#aaa4c3"/>
<polygon points="911.2,576.5 881.7,584.8 890.7,595.1 920.4,586.5" fill="#cdc7ec"/>
<polygon points="911.2,576.5 881.7,584.8 889.2,593.3 918.8,584.8" fill="#b5afd1"/>
<ellipse cx="900.6" cy="585.1" rx="2.8" ry="1.9" fill="#c4bee0" stroke="#a39dbf" stroke-width="0.6"/>
<polygon points="929.9,588.8 924.0,590.5 927.2,593.9 933.0,592.2" fill="#aaa4c3"/>
<polygon points="924.0,590.5 894.3,599.1 903.5,609.7 933.5,600.8" fill="#cdc7ec"/>
<polygon points="924.0,590.5 894.3,599.1 902.0,607.9 931.9,599.1" fill="#b5afd1"/>
<ellipse cx="913.4" cy="599.4" rx="2.8" ry="1.9" fill="#c4bee0" stroke="#a39dbf" stroke-width="0.6"/>
<polygon points="943.2,603.2 937.3,604.9 940.5,608.5 946.4,606.7" fill="#aaa4c3"/>
<polygon points="937.3,604.9 907.2,613.9 916.8,624.8 947.0,615.6" fill="#cdc7ec"/>
<polygon points="937.3,604.9 907.2,613.9 915.2,623.0 945.4,613.8" fill="#b5afd1"/>
<ellipse cx="926.6" cy="614.1" rx="2.8" ry="1.9" fill="#c4bee0" stroke="#a39dbf" stroke-width="0.6"/>
<polygon points="956.9,618.0 950.9,619.8 954.3,623.5 960.3,621.6" fill="#aaa4c3"/>
<polygon points="950.9,619.8 920.5,629.1 930.4,640.4 961.0,630.9" fill="#cdc7ec"/>
<polygon points="950.9,619.8 920.5,629.1 928.8,638.5 959.3,629.0" fill="#b5afd1"/>
<ellipse cx="940.2" cy="629.4" rx="2.8" ry="1.9" fill="#c4bee0" stroke="#a39dbf" stroke-width="0.6"/>
<polygon points="971.1,633.3 965.0,635.2 968.5,639.0 974.5,637.1" fill="#aaa4c3"/>
<polygon points="965.0,635.2 934.3,644.8 944.5,656.5 975.4,646.6" fill="#cdc7ec"/>
<polygon points="965.0,635.2 934.3,644.8 942.8,654.5 973.7,644.7" fill="#b5afd1"/>
<ellipse cx="954.3" cy="645.1" rx="2.8" ry="1.9" fill="#c4bee0" stroke="#a39dbf" stroke-width="0.6"/>
<polygon points="1000.0,664.6 993.8,666.7 997.5,670.7 1003.7,668.6" fill="#aaa4c3"/>
<polygon points="993.8,666.7 962.5,677.0 973.4,689.5 1004.9,678.8" fill="#cdc7ec"/>
<polygon points="993.8,666.7 962.5,677.0 971.6,687.4 1003.1,676.8" fill="#b5afd1"/>
<ellipse cx="983.1" cy="677.2" rx="2.8" ry="1.9" fill="#c4bee0" stroke="#a39dbf" stroke-width="0.6"/>
<polygon points="1017.9,684.1 1011.7,686.2 1015.5,690.4 1021.8,688.2" fill="#aaa4c3"/>
<polygon points="1011.7,686.2 980.0,697.0 991.3,709.9 1023.3,698.8" fill="#cdc7ec"/>
<polygon points="1011.7,686.2 980.0,697.0 989.4,707.8 1021.3,696.7" fill="#b5afd1"/>
<ellipse cx="1001.0" cy="697.2" rx="2.8" ry="1.9" fill="#c4bee0" stroke="#a39dbf" stroke-width="0.6"/>
<polygon points="1036.6,704.3 1030.3,706.5 1034.3,710.8 1040.6,708.6" fill="#aaa4c3"/>
<polygon points="1030.3,706.5 998.2,717.8 1010.0,731.3 1042.3,719.6" fill="#cdc7ec"/>
<polygon points="1030.3,706.5 998.2,717.8 1008.0,729.0 1040.3,717.4" fill="#b5afd1"/>
<ellipse cx="1019.6" cy="718.0" rx="2.8" ry="1.9" fill="#c4bee0" stroke="#a39dbf" stroke-width="0.6"/>
<polygon points="1022.7,300.3 1158.3,273.9 1487.7,457.8 1335.3,506.2" fill="#aaa4c3"/>
<polygon points="1361.9,523.8 1515.3,473.2 1571.4,504.5 1416.4,559.7" fill="#aaa4c3"/>
<polygon points="1148.7,279.9 1163.8,276.9 1495.1,461.9 1478.4,467.3" fill="#a6a0c0"/>
<polygon points="1025.5,302.2 1161.3,275.5 1162.1,276.0 1026.3,302.7" fill="#9a95b4"/>
<polygon points="1028.2,304.0 1164.2,277.2 1165.2,277.7 1029.1,304.6" fill="#c6c0e3"/>
<polygon points="1015.1,301.8 1022.7,300.3 1029.1,304.6 1021.5,306.1" fill="#eef2fc"/>
<polygon points="1035.8,309.0 1172.3,281.7 1173.2,282.2 1036.6,309.5" fill="#9a95b4"/>
<polygon points="1039.1,311.2 1175.9,283.7 1176.8,284.2 1040.0,311.8" fill="#c6c0e3"/>
<polygon points="1024.8,308.3 1032.4,306.8 1040.0,311.8 1032.4,313.3" fill="#eef2fc"/>
<polygon points="1047.4,316.6 1184.7,288.6 1185.6,289.1 1048.2,317.2" fill="#9a95b4"/>
<polygon points="1051.3,319.2 1188.8,290.9 1189.8,291.5 1052.2,319.8" fill="#c6c0e3"/>
<polygon points="1035.8,315.6 1043.4,314.0 1052.2,319.8 1044.5,321.4" fill="#eef2fc"/>
<polygon points="1048.0,323.7 1193.6,293.6 1208.2,301.7 1061.6,332.8" fill="#eef2fc"/>
<polygon points="1068.4,319.4 1193.6,293.6 1197.2,295.6 1071.9,321.7" fill="#aaa4c3"/>
<polygon points="1085.3,318.9 1197.2,295.6 1199.1,296.7 1087.1,320.0" fill="#c6c0e3"/>
<polygon points="1092.2,323.3 1204.5,299.7 1208.2,301.7 1095.8,325.5" fill="#aaa4c3"/>
<polygon points="1076.0,335.5 1215.3,305.7 1216.2,306.2 1076.9,336.1" fill="#9a95b4"/>
<polygon points="1079.0,337.4 1218.4,307.4 1219.4,308.0 1079.9,338.1" fill="#c6c0e3"/>
<polygon points="1065.2,335.1 1073.0,333.5 1079.9,338.1 1072.1,339.8" fill="#eef2fc"/>
<polygon points="1086.7,342.5 1226.7,312.0 1227.6,312.6 1087.6,343.1" fill="#9a95b4"/>
<polygon points="1089.7,344.5 1229.9,313.8 1230.9,314.4 1090.7,345.2" fill="#c6c0e3"/>
<polygon points="1075.8,342.2 1083.6,340.5 1090.7,345.2 1082.9,346.9" fill="#eef2fc"/>
<polygon points="1097.6,349.7 1238.3,318.5 1239.2,319.1 1098.5,350.3" fill="#9a95b4"/>
<polygon points="1100.7,351.7 1241.5,320.3 1242.6,320.9 1101.7,352.4" fill="#c6c0e3"/>
<polygon points="1086.6,349.4 1094.5,347.6 1101.7,352.4 1093.8,354.2" fill="#eef2fc"/>
<polygon points="1108.8,357.1 1250.1,325.1 1251.1,325.7 1109.7,357.7" fill="#9a95b4"/>
<polygon points="1111.9,359.1 1253.4,327.0 1254.5,327.6 1112.9,359.8" fill="#c6c0e3"/>
<polygon points="1097.6,356.7 1105.5,354.9 1112.9,359.8 1105.0,361.6" fill="#eef2fc"/>
<polygon points="1120.1,364.5 1262.1,331.9 1263.1,332.4 1121.1,365.1" fill="#9a95b4"/>
<polygon points="1123.3,366.6 1265.5,333.7 1266.6,334.4 1124.4,367.3" fill="#c6c0e3"/>
<polygon points="1108.9,364.2 1116.8,362.4 1124.4,367.3 1116.4,369.2" fill="#eef2fc"/>
<polygon points="1131.7,372.2 1274.4,338.7 1275.4,339.3 1132.7,372.8" fill="#9a95b4"/>
<polygon points="1135.0,374.3 1277.9,340.6 1279.0,341.3 1136.1,375.0" fill="#c6c0e3"/>
<polygon points="1120.4,371.8 1128.4,370.0 1136.1,375.0 1128.0,376.9" fill="#eef2fc"/>
<polygon points="1143.6,380.0 1287.0,345.7 1288.0,346.3 1144.5,380.6" fill="#9a95b4"/>
<polygon points="1146.9,382.2 1290.5,347.7 1291.6,348.3 1148.0,382.9" fill="#c6c0e3"/>
<polygon points="1132.1,379.6 1140.1,377.7 1148.0,382.9 1139.9,384.8" fill="#eef2fc"/>
<polygon points="1155.7,387.9 1299.8,352.8 1300.8,353.4 1156.6,388.6" fill="#9a95b4"/>
<polygon points="1159.1,390.2 1303.3,354.9 1304.5,355.5 1160.2,390.9" fill="#c6c0e3"/>
<polygon points="1144.1,387.6 1152.2,385.6 1160.2,390.9 1152.1,392.9" fill="#eef2fc"/>
<polygon points="1168.0,396.1 1312.8,360.1 1313.9,360.7 1169.0,396.7" fill="#9a95b4"/>
<polygon points="1171.5,398.4 1316.5,362.2 1317.7,362.8 1172.6,399.1" fill="#c6c0e3"/>
<polygon points="1156.3,395.7 1164.4,393.7 1172.6,399.1 1164.5,401.2" fill="#eef2fc"/>
<polygon points="1180.6,404.4 1326.1,367.6 1327.2,368.2 1181.7,405.1" fill="#9a95b4"/>
<polygon points="1184.2,406.7 1329.8,369.6 1331.1,370.3 1185.3,407.5" fill="#c6c0e3"/>
<polygon points="1168.8,404.0 1177.0,402.0 1185.3,407.5 1177.1,409.6" fill="#eef2fc"/>
<polygon points="1193.5,412.9 1339.7,375.1 1340.8,375.8 1194.6,413.6" fill="#9a95b4"/>
<polygon points="1197.2,415.3 1343.5,377.3 1344.8,378.0 1198.4,416.1" fill="#c6c0e3"/>
<polygon points="1181.6,412.5 1189.8,410.4 1198.4,416.1 1190.1,418.2" fill="#eef2fc"/>
<polygon points="1206.7,421.6 1353.5,382.9 1354.7,383.5 1207.8,422.3" fill="#9a95b4"/>
<polygon points="1210.4,424.0 1357.4,385.1 1358.7,385.8 1211.6,424.8" fill="#c6c0e3"/>
<polygon points="1194.6,421.2 1202.9,419.1 1211.6,424.8 1203.3,427.0" fill="#eef2fc"/>
<polygon points="1220.2,430.4 1367.7,390.8 1368.9,391.4 1221.3,431.2" fill="#9a95b4"/>
<polygon points="1224.0,432.9 1371.7,393.0 1373.0,393.7 1225.2,433.8" fill="#c6c0e3"/>
<polygon points="1208.0,430.1 1216.3,427.9 1225.2,433.8 1216.9,436.0" fill="#eef2fc"/>
<polygon points="1234.0,439.5 1382.1,398.8 1383.3,399.5 1235.1,440.3" fill="#9a95b4"/>
<polygon points="1237.9,442.1 1386.2,401.1 1387.5,401.9 1239.1,442.9" fill="#c6c0e3"/>
<polygon points="1221.6,439.2 1230.0,436.9 1239.1,442.9 1230.7,445.2" fill="#eef2fc"/>
<polygon points="1248.1,448.8 1396.9,407.1 1398.1,407.8 1249.2,449.6" fill="#9a95b4"/>
<polygon points="1252.0,451.4 1401.1,409.4 1402.4,410.2 1253.4,452.3" fill="#c6c0e3"/>
<polygon points="1235.6,448.5 1244.0,446.1 1253.4,452.3 1244.9,454.7" fill="#eef2fc"/>
<polygon points="1262.5,458.3 1412.0,415.5 1413.2,416.2 1263.7,459.1" fill="#9a95b4"/>
<polygon points="1266.6,461.0 1416.2,417.9 1417.6,418.7 1267.9,461.9" fill="#c6c0e3"/>
<polygon points="1249.9,458.0 1258.3,455.6 1267.9,461.9 1259.4,464.3" fill="#eef2fc"/>
<polygon points="1277.3,468.0 1427.4,424.1 1428.7,424.8 1278.5,468.8" fill="#9a95b4"/>
<polygon points="1281.4,470.8 1431.7,426.5 1433.2,427.3 1282.8,471.7" fill="#c6c0e3"/>
<polygon points="1264.5,467.7 1273.0,465.2 1282.8,471.7 1274.3,474.2" fill="#eef2fc"/>
<polygon points="1292.4,478.0 1443.2,432.9 1444.4,433.6 1293.6,478.8" fill="#9a95b4"/>
<polygon points="1296.6,480.8 1447.6,435.4 1449.0,436.2 1298.1,481.7" fill="#c6c0e3"/>
<polygon points="1279.5,477.7 1288.0,475.1 1298.1,481.7 1289.5,484.3" fill="#eef2fc"/>
<polygon points="1307.9,488.2 1459.3,441.9 1460.6,442.6 1309.1,489.0" fill="#9a95b4"/>
<polygon points="1312.2,491.1 1463.8,444.4 1465.3,445.3 1313.7,492.0" fill="#c6c0e3"/>
<polygon points="1294.8,487.9 1303.4,485.2 1313.7,492.0 1305.1,494.7" fill="#eef2fc"/>
<polygon points="1323.7,498.6 1475.7,451.1 1477.1,451.9 1325.0,499.5" fill="#9a95b4"/>
<polygon points="1328.2,501.6 1480.4,453.7 1481.9,454.5 1329.7,502.6" fill="#c6c0e3"/>
<polygon points="1310.5,498.3 1319.1,495.6 1329.7,502.6 1321.0,505.3" fill="#eef2fc"/>
<polygon points="1326.6,509.0 1487.7,457.8 1515.3,473.2 1353.2,526.7" fill="#eef2fc"/>
<polygon points="1349.6,501.7 1487.7,457.8 1493.4,461.0 1355.1,505.3" fill="#aaa4c3"/>
<polygon points="1370.1,500.5 1493.4,461.0 1496.3,462.6 1373.0,502.3" fill="#c6c0e3"/>
<polygon points="1385.8,510.4 1509.5,469.9 1515.3,473.2 1391.5,514.1" fill="#aaa4c3"/>
<polygon points="1374.0,531.8 1527.8,480.2 1529.2,481.0 1375.4,532.7" fill="#e8ecf8"/>
<polygon points="1380.1,535.8 1534.0,483.7 1535.7,484.6 1381.7,536.8" fill="#c6c0e3"/>
<polygon points="1359.1,530.6 1367.8,527.7 1381.7,536.8 1372.9,539.8" fill="#eef2fc"/>
<polygon points="1393.7,544.7 1548.0,491.5 1549.5,492.3 1395.1,545.7" fill="#e8ecf8"/>
<polygon points="1399.5,548.5 1554.0,494.8 1555.7,495.7 1401.1,549.6" fill="#c6c0e3"/>
<polygon points="1378.9,543.8 1387.7,540.8 1401.1,549.6 1392.3,552.7" fill="#eef2fc"/>
<polygon points="1411.1,556.2 1566.0,501.5 1567.5,502.3 1412.6,557.2" fill="#e8ecf8"/>
<polygon points="1414.7,558.6 1569.7,503.6 1571.4,504.5 1416.4,559.7" fill="#c6c0e3"/>
<polygon points="1398.5,556.8 1407.3,553.7 1416.4,559.7 1407.5,562.8" fill="#eef2fc"/>
<polygon points="1018.1,306.8 1134.7,283.7 1138.2,285.8 1021.4,309.0" fill="#5f0848"/>
<polygon points="1135.4,284.1 1150.8,281.1 1153.6,282.7 1138.2,285.8" fill="#eef2fc"/>
<polygon points="1028.9,314.0 1146.2,290.4 1149.8,292.5 1032.3,316.3" fill="#5f0848"/>
<polygon points="1146.9,290.8 1162.4,287.7 1165.2,289.3 1149.8,292.5" fill="#eef2fc"/>
<polygon points="1041.0,322.1 1159.0,297.8 1162.7,299.9 1044.5,324.4" fill="#5f0848"/>
<polygon points="1159.8,298.3 1175.3,295.1 1178.2,296.7 1162.7,299.9" fill="#eef2fc"/>
<polygon points="1058.1,333.5 1177.1,308.3 1181.0,310.5 1061.7,335.9" fill="#5f0848"/>
<polygon points="1177.9,308.7 1193.6,305.4 1196.6,307.2 1181.0,310.5" fill="#eef2fc"/>
<polygon points="1068.6,340.5 1188.3,314.7 1192.1,317.0 1072.3,343.0" fill="#5f0848"/>
<polygon points="1189.1,315.2 1204.8,311.8 1207.9,313.6 1192.1,317.0" fill="#eef2fc"/>
<polygon points="1079.3,347.7 1199.6,321.3 1203.5,323.6 1083.1,350.2" fill="#5f0848"/>
<polygon points="1200.4,321.8 1216.2,318.3 1219.3,320.1 1203.5,323.6" fill="#eef2fc"/>
<polygon points="1090.3,355.0 1211.1,328.0 1215.2,330.3 1094.1,357.5" fill="#5f0848"/>
<polygon points="1212.0,328.4 1227.8,324.9 1231.0,326.7 1215.2,330.3" fill="#eef2fc"/>
<polygon points="1101.4,362.4 1222.9,334.8 1227.0,337.2 1105.3,365.0" fill="#5f0848"/>
<polygon points="1223.7,335.3 1239.7,331.6 1242.9,333.5 1227.0,337.2" fill="#eef2fc"/>
<polygon points="1112.8,370.0 1234.9,341.7 1239.1,344.1 1116.8,372.7" fill="#5f0848"/>
<polygon points="1235.8,342.2 1251.8,338.5 1255.1,340.4 1239.1,344.1" fill="#eef2fc"/>
<polygon points="1124.4,377.8 1247.1,348.8 1251.4,351.3 1128.5,380.5" fill="#5f0848"/>
<polygon points="1248.0,349.3 1264.1,345.5 1267.5,347.5 1251.4,351.3" fill="#eef2fc"/>
<polygon points="1136.3,385.7 1259.6,356.0 1264.0,358.6 1140.4,388.5" fill="#5f0848"/>
<polygon points="1260.5,356.5 1276.7,352.7 1280.1,354.6 1264.0,358.6" fill="#eef2fc"/>
<polygon points="1148.4,393.8 1272.4,363.4 1276.8,366.0 1152.7,396.6" fill="#5f0848"/>
<polygon points="1273.3,363.9 1289.5,360.0 1293.0,362.0 1276.8,366.0" fill="#eef2fc"/>
<polygon points="1160.8,402.1 1285.4,370.9 1289.9,373.6 1165.1,405.0" fill="#5f0848"/>
<polygon points="1286.3,371.5 1302.6,367.4 1306.2,369.5 1289.9,373.6" fill="#eef2fc"/>
<polygon points="1173.5,410.5 1298.6,378.6 1303.3,381.3 1177.9,413.5" fill="#5f0848"/>
<polygon points="1299.6,379.2 1315.9,375.0 1319.6,377.1 1303.3,381.3" fill="#eef2fc"/>
<polygon points="1186.4,419.2 1312.2,386.4 1316.9,389.2 1190.9,422.2" fill="#5f0848"/>
<polygon points="1313.2,387.0 1329.6,382.7 1333.3,384.9 1316.9,389.2" fill="#eef2fc"/>
<polygon points="1199.6,428.0 1326.0,394.4 1330.9,397.2 1204.3,431.1" fill="#5f0848"/>
<polygon points="1327.0,395.0 1343.5,390.6 1347.4,392.8 1330.9,397.2" fill="#eef2fc"/>
<polygon points="1213.2,437.0 1340.2,402.6 1345.1,405.5 1217.9,440.2" fill="#5f0848"/>
<polygon points="1341.2,403.2 1357.7,398.7 1361.7,401.0 1345.1,405.5" fill="#eef2fc"/>
<polygon points="1227.0,446.3 1354.6,411.0 1359.6,413.9 1231.8,449.5" fill="#5f0848"/>
<polygon points="1355.6,411.6 1372.2,407.0 1376.3,409.3 1359.6,413.9" fill="#eef2fc"/>
<polygon points="1241.2,455.7 1369.3,419.5 1374.5,422.5 1246.1,459.0" fill="#5f0848"/>
<polygon points="1370.4,420.1 1387.1,415.4 1391.2,417.8 1374.5,422.5" fill="#eef2fc"/>
<polygon points="1255.6,465.4 1384.4,428.2 1389.7,431.3 1260.7,468.8" fill="#5f0848"/>
<polygon points="1385.5,428.9 1402.2,424.0 1406.4,426.4 1389.7,431.3" fill="#eef2fc"/>
<polygon points="1270.5,475.3 1399.8,437.2 1405.2,440.3 1275.7,478.8" fill="#5f0848"/>
<polygon points="1400.9,437.8 1417.7,432.8 1422.0,435.3 1405.2,440.3" fill="#eef2fc"/>
<polygon points="1285.7,485.5 1415.6,446.3 1421.1,449.5 1291.0,489.0" fill="#5f0848"/>
<polygon points="1416.7,446.9 1433.6,441.8 1438.0,444.3 1421.1,449.5" fill="#eef2fc"/>
<polygon points="1301.2,495.9 1431.7,455.6 1437.4,458.9 1306.7,499.5" fill="#5f0848"/>
<polygon points="1432.9,456.3 1449.8,451.1 1454.3,453.6 1437.4,458.9" fill="#eef2fc"/>
<polygon points="1317.2,506.5 1448.2,465.2 1454.0,468.5 1322.7,510.2" fill="#5f0848"/>
<polygon points="1449.4,465.8 1466.4,460.5 1471.0,463.1 1454.0,468.5" fill="#eef2fc"/>
<polygon points="1349.3,528.0 1481.4,484.4 1487.5,487.9 1355.2,531.9" fill="#5f0848"/>
<polygon points="1482.7,485.1 1499.8,479.4 1504.6,482.2 1487.5,487.9" fill="#eef2fc"/>
<polygon points="1369.0,541.1 1501.7,496.1 1507.9,499.7 1375.0,545.2" fill="#5f0848"/>
<polygon points="1503.0,496.8 1520.1,491.0 1525.1,493.8 1507.9,499.7" fill="#eef2fc"/>
<polygon points="1388.3,554.0 1521.6,507.6 1528.0,511.3 1394.5,558.2" fill="#5f0848"/>
<polygon points="1522.9,508.4 1540.1,502.4 1545.2,505.3 1528.0,511.3" fill="#eef2fc"/>
<polygon points="1495.3,476.9 1512.1,471.4 1523.7,477.9 1506.9,483.5" fill="#aaa4c4"/>
<polygon points="1515.6,488.4 1532.4,482.7 1544.3,489.4 1527.5,495.2" fill="#aaa4c4"/>
<polygon points="1535.4,499.7 1552.3,493.9 1564.6,500.7 1547.6,506.7" fill="#aaa4c4"/>
<ellipse cx="1162.0" cy="281.7" rx="3.0" ry="2.0" fill="#b0aacb" stroke="#9791b2" stroke-width="0.5"/>
<ellipse cx="1172.7" cy="287.7" rx="3.0" ry="2.0" fill="#b0aacb" stroke="#9791b2" stroke-width="0.5"/>
<ellipse cx="1183.5" cy="293.8" rx="3.0" ry="2.0" fill="#b0aacb" stroke="#9791b2" stroke-width="0.5"/>
<ellipse cx="1194.6" cy="300.0" rx="3.0" ry="2.0" fill="#b0aacb" stroke="#9791b2" stroke-width="0.5"/>
<ellipse cx="1205.8" cy="306.3" rx="3.0" ry="2.0" fill="#b0aacb" stroke="#9791b2" stroke-width="0.5"/>
<ellipse cx="1217.3" cy="312.8" rx="3.0" ry="2.0" fill="#b0aacb" stroke="#9791b2" stroke-width="0.5"/>
<ellipse cx="1229.0" cy="319.4" rx="3.0" ry="2.0" fill="#b0aacb" stroke="#9791b2" stroke-width="0.5"/>
<ellipse cx="1240.9" cy="326.1" rx="3.0" ry="2.0" fill="#b0aacb" stroke="#9791b2" stroke-width="0.5"/>
<ellipse cx="1253.1" cy="333.0" rx="3.0" ry="2.0" fill="#b0aacb" stroke="#9791b2" stroke-width="0.5"/>
<ellipse cx="1265.5" cy="339.9" rx="3.0" ry="2.0" fill="#b0aacb" stroke="#9791b2" stroke-width="0.5"/>
<ellipse cx="1278.1" cy="347.1" rx="3.0" ry="2.0" fill="#b0aacb" stroke="#9791b2" stroke-width="0.5"/>
<ellipse cx="1291.0" cy="354.3" rx="3.0" ry="2.0" fill="#b0aacb" stroke="#9791b2" stroke-width="0.5"/>
<ellipse cx="1304.2" cy="361.7" rx="3.0" ry="2.0" fill="#b0aacb" stroke="#9791b2" stroke-width="0.5"/>
<ellipse cx="1317.6" cy="369.3" rx="3.0" ry="2.0" fill="#b0aacb" stroke="#9791b2" stroke-width="0.5"/>
<ellipse cx="1331.3" cy="377.0" rx="3.0" ry="2.0" fill="#b0aacb" stroke="#9791b2" stroke-width="0.5"/>
<ellipse cx="1345.3" cy="384.9" rx="3.0" ry="2.0" fill="#b0aacb" stroke="#9791b2" stroke-width="0.5"/>
<ellipse cx="1359.6" cy="393.0" rx="3.0" ry="2.0" fill="#b0aacb" stroke="#9791b2" stroke-width="0.5"/>
<ellipse cx="1374.2" cy="401.2" rx="3.0" ry="2.0" fill="#b0aacb" stroke="#9791b2" stroke-width="0.5"/>
<ellipse cx="1389.2" cy="409.6" rx="3.0" ry="2.0" fill="#b0aacb" stroke="#9791b2" stroke-width="0.5"/>
<ellipse cx="1404.4" cy="418.2" rx="3.0" ry="2.0" fill="#b0aacb" stroke="#9791b2" stroke-width="0.5"/>
<ellipse cx="1420.0" cy="427.0" rx="3.0" ry="2.0" fill="#b0aacb" stroke="#9791b2" stroke-width="0.5"/>
<ellipse cx="1436.0" cy="436.0" rx="3.0" ry="2.0" fill="#b0aacb" stroke="#9791b2" stroke-width="0.5"/>
<ellipse cx="1452.3" cy="445.2" rx="3.0" ry="2.0" fill="#b0aacb" stroke="#9791b2" stroke-width="0.5"/>
<ellipse cx="1469.0" cy="454.6" rx="3.0" ry="2.0" fill="#b0aacb" stroke="#9791b2" stroke-width="0.5"/>
<ellipse cx="1510.0" cy="477.7" rx="3.0" ry="2.0" fill="#b0aacb" stroke="#9791b2" stroke-width="0.5"/>
<ellipse cx="1530.4" cy="489.2" rx="3.0" ry="2.0" fill="#b0aacb" stroke="#9791b2" stroke-width="0.5"/>
<ellipse cx="1550.5" cy="500.5" rx="3.0" ry="2.0" fill="#b0aacb" stroke="#9791b2" stroke-width="0.5"/>
<polygon points="1163.7,278.0 1167.4,277.3 1169.9,278.7 1166.2,279.4" fill="#aaa4c3"/>
<polygon points="1167.4,277.3 1180.8,274.6 1188.5,278.8 1175.0,281.5" fill="#cdc7ec"/>
<polygon points="1167.4,277.3 1180.8,274.6 1187.2,278.1 1173.8,280.8" fill="#b5afd1"/>
<ellipse cx="1177.5" cy="277.8" rx="2.8" ry="1.9" fill="#c4bee0" stroke="#a39dbf" stroke-width="0.6"/>
<polygon points="1174.2,283.9 1178.0,283.2 1180.6,284.6 1176.8,285.4" fill="#aaa4c3"/>
<polygon points="1178.0,283.2 1191.5,280.5 1199.3,284.7 1185.8,287.5" fill="#cdc7ec"/>
<polygon points="1178.0,283.2 1191.5,280.5 1198.0,284.0 1184.5,286.8" fill="#b5afd1"/>
<ellipse cx="1188.2" cy="283.7" rx="2.8" ry="1.9" fill="#c4bee0" stroke="#a39dbf" stroke-width="0.6"/>
<polygon points="1185.0,290.0 1188.8,289.2 1191.5,290.6 1187.7,291.4" fill="#aaa4c3"/>
<polygon points="1188.8,289.2 1202.4,286.4 1210.3,290.8 1196.7,293.6" fill="#cdc7ec"/>
<polygon points="1188.8,289.2 1202.4,286.4 1209.0,290.0 1195.4,292.8" fill="#b5afd1"/>
<ellipse cx="1199.1" cy="289.7" rx="2.8" ry="1.9" fill="#c4bee0" stroke="#a39dbf" stroke-width="0.6"/>
<polygon points="1196.0,296.1 1199.8,295.3 1202.5,296.8 1198.7,297.6" fill="#aaa4c3"/>
<polygon points="1199.8,295.3 1213.5,292.5 1221.5,296.9 1207.9,299.8" fill="#cdc7ec"/>
<polygon points="1199.8,295.3 1213.5,292.5 1220.2,296.2 1206.5,299.0" fill="#b5afd1"/>
<ellipse cx="1210.2" cy="295.9" rx="2.8" ry="1.9" fill="#c4bee0" stroke="#a39dbf" stroke-width="0.6"/>
<polygon points="1207.2,302.4 1211.0,301.6 1213.8,303.1 1209.9,303.9" fill="#aaa4c3"/>
<polygon points="1211.0,301.6 1224.7,298.7 1233.0,303.2 1219.3,306.1" fill="#cdc7ec"/>
<polygon points="1211.0,301.6 1224.7,298.7 1231.6,302.4 1217.9,305.4" fill="#b5afd1"/>
<ellipse cx="1221.5" cy="302.1" rx="2.8" ry="1.9" fill="#c4bee0" stroke="#a39dbf" stroke-width="0.6"/>
<polygon points="1218.6,308.7 1222.5,307.9 1225.2,309.5 1221.4,310.3" fill="#aaa4c3"/>
<polygon points="1222.5,307.9 1236.2,305.0 1244.6,309.6 1230.8,312.6" fill="#cdc7ec"/>
<polygon points="1222.5,307.9 1236.2,305.0 1243.2,308.8 1229.4,311.8" fill="#b5afd1"/>
<ellipse cx="1233.1" cy="308.5" rx="2.8" ry="1.9" fill="#c4bee0" stroke="#a39dbf" stroke-width="0.6"/>
<polygon points="1230.3,315.3 1234.1,314.4 1236.9,316.0 1233.1,316.8" fill="#aaa4c3"/>
<polygon points="1234.1,314.4 1247.9,311.4 1256.5,316.1 1242.6,319.1" fill="#cdc7ec"/>
<polygon points="1234.1,314.4 1247.9,311.4 1255.0,315.3 1241.2,318.4" fill="#b5afd1"/>
<ellipse cx="1244.8" cy="315.0" rx="2.8" ry="1.9" fill="#c4bee0" stroke="#a39dbf" stroke-width="0.6"/>
<polygon points="1242.1,321.9 1246.0,321.0 1248.9,322.6 1245.0,323.5" fill="#aaa4c3"/>
<polygon points="1246.0,321.0 1259.8,317.9 1268.6,322.7 1254.7,325.8" fill="#cdc7ec"/>
<polygon points="1246.0,321.0 1259.8,317.9 1267.1,321.9 1253.2,325.0" fill="#b5afd1"/>
<ellipse cx="1256.8" cy="321.6" rx="2.8" ry="1.9" fill="#c4bee0" stroke="#a39dbf" stroke-width="0.6"/>
<polygon points="1254.2,328.6 1258.1,327.7 1261.0,329.4 1257.1,330.3" fill="#aaa4c3"/>
<polygon points="1258.1,327.7 1272.0,324.6 1280.9,329.5 1266.9,332.7" fill="#cdc7ec"/>
<polygon points="1258.1,327.7 1272.0,324.6 1279.4,328.6 1265.5,331.9" fill="#b5afd1"/>
<ellipse cx="1269.0" cy="328.3" rx="2.8" ry="1.9" fill="#c4bee0" stroke="#a39dbf" stroke-width="0.6"/>
<polygon points="1266.5,335.5 1270.4,334.6 1273.4,336.3 1269.5,337.2" fill="#aaa4c3"/>
<polygon points="1270.4,334.6 1284.4,331.4 1293.5,336.3 1279.5,339.6" fill="#cdc7ec"/>
<polygon points="1270.4,334.6 1284.4,331.4 1292.0,335.5 1277.9,338.8" fill="#b5afd1"/>
<ellipse cx="1281.4" cy="335.2" rx="2.8" ry="1.9" fill="#c4bee0" stroke="#a39dbf" stroke-width="0.6"/>
<polygon points="1279.1,342.6 1283.0,341.6 1286.1,343.3 1282.1,344.3" fill="#aaa4c3"/>
<polygon points="1283.0,341.6 1297.0,338.3 1306.3,343.4 1292.2,346.8" fill="#cdc7ec"/>
<polygon points="1283.0,341.6 1297.0,338.3 1304.7,342.5 1290.7,345.9" fill="#b5afd1"/>
<ellipse cx="1294.1" cy="342.2" rx="2.8" ry="1.9" fill="#c4bee0" stroke="#a39dbf" stroke-width="0.6"/>
<polygon points="1291.9,349.7 1295.8,348.8 1299.0,350.5 1295.0,351.5" fill="#aaa4c3"/>
<polygon points="1295.8,348.8 1309.9,345.4 1319.4,350.5 1305.2,354.0" fill="#cdc7ec"/>
<polygon points="1295.8,348.8 1309.9,345.4 1317.8,349.7 1303.7,353.1" fill="#b5afd1"/>
<ellipse cx="1307.1" cy="349.4" rx="2.8" ry="1.9" fill="#c4bee0" stroke="#a39dbf" stroke-width="0.6"/>
<polygon points="1305.0,357.0 1308.9,356.1 1312.1,357.8 1308.2,358.8" fill="#aaa4c3"/>
<polygon points="1308.9,356.1 1323.1,352.6 1332.7,357.9 1318.5,361.4" fill="#cdc7ec"/>
<polygon points="1308.9,356.1 1323.1,352.6 1331.1,357.0 1316.9,360.5" fill="#b5afd1"/>
<ellipse cx="1320.3" cy="356.7" rx="2.8" ry="1.9" fill="#c4bee0" stroke="#a39dbf" stroke-width="0.6"/>
<polygon points="1318.3,364.5 1322.3,363.5 1325.5,365.3 1321.6,366.3" fill="#aaa4c3"/>
<polygon points="1322.3,363.5 1336.5,359.9 1346.3,365.3 1332.1,369.0" fill="#cdc7ec"/>
<polygon points="1322.3,363.5 1336.5,359.9 1344.7,364.4 1330.4,368.0" fill="#b5afd1"/>
<ellipse cx="1333.8" cy="364.1" rx="2.8" ry="1.9" fill="#c4bee0" stroke="#a39dbf" stroke-width="0.6"/>
<polygon points="1331.9,372.1 1335.9,371.1 1339.3,372.9 1335.3,374.0" fill="#aaa4c3"/>
<polygon points="1335.9,371.1 1350.2,367.5 1360.2,373.0 1345.9,376.7" fill="#cdc7ec"/>
<polygon points="1335.9,371.1 1350.2,367.5 1358.6,372.0 1344.3,375.7" fill="#b5afd1"/>
<ellipse cx="1347.5" cy="371.7" rx="2.8" ry="1.9" fill="#c4bee0" stroke="#a39dbf" stroke-width="0.6"/>
<polygon points="1345.9,379.9 1349.9,378.9 1353.3,380.7 1349.2,381.8" fill="#aaa4c3"/>
<polygon points="1349.9,378.9 1364.2,375.1 1374.4,380.7 1360.1,384.5" fill="#cdc7ec"/>
<polygon points="1349.9,378.9 1364.2,375.1 1372.7,379.8 1358.4,383.6" fill="#b5afd1"/>
<ellipse cx="1361.6" cy="379.5" rx="2.8" ry="1.9" fill="#c4bee0" stroke="#a39dbf" stroke-width="0.6"/>
<polygon points="1360.1,387.8 1364.1,386.8 1367.5,388.7 1363.5,389.8" fill="#aaa4c3"/>
<polygon points="1364.1,386.8 1378.5,382.9 1388.9,388.7 1374.5,392.6" fill="#cdc7ec"/>
<polygon points="1364.1,386.8 1378.5,382.9 1387.2,387.7 1372.8,391.6" fill="#b5afd1"/>
<ellipse cx="1375.9" cy="387.4" rx="2.8" ry="1.9" fill="#c4bee0" stroke="#a39dbf" stroke-width="0.6"/>
<polygon points="1374.6,396.0 1378.6,394.9 1382.1,396.8 1378.1,397.9" fill="#aaa4c3"/>
<polygon points="1378.6,394.9 1393.0,390.9 1403.7,396.8 1389.3,400.8" fill="#cdc7ec"/>
<polygon points="1378.6,394.9 1393.0,390.9 1401.9,395.8 1387.5,399.8" fill="#b5afd1"/>
<ellipse cx="1390.6" cy="395.5" rx="2.8" ry="1.9" fill="#c4bee0" stroke="#a39dbf" stroke-width="0.6"/>
<polygon points="1389.4,404.3 1393.4,403.1 1397.1,405.1 1393.0,406.3" fill="#aaa4c3"/>
<polygon points="1393.4,403.1 1407.9,399.1 1418.9,405.1 1404.3,409.2" fill="#cdc7ec"/>
<polygon points="1393.4,403.1 1407.9,399.1 1417.0,404.1 1402.5,408.2" fill="#b5afd1"/>
<ellipse cx="1405.5" cy="403.8" rx="2.8" ry="1.9" fill="#c4bee0" stroke="#a39dbf" stroke-width="0.6"/>
<polygon points="1404.5,412.7 1408.6,411.6 1412.3,413.6 1408.2,414.8" fill="#aaa4c3"/>
<polygon points="1408.6,411.6 1423.1,407.4 1434.3,413.6 1419.7,417.8" fill="#cdc7ec"/>
<polygon points="1408.6,411.6 1423.1,407.4 1432.4,412.5 1417.9,416.7" fill="#b5afd1"/>
<ellipse cx="1420.8" cy="412.2" rx="2.8" ry="1.9" fill="#c4bee0" stroke="#a39dbf" stroke-width="0.6"/>
<polygon points="1420.0,421.4 1424.1,420.2 1427.9,422.3 1423.8,423.5" fill="#aaa4c3"/>
<polygon points="1424.1,420.2 1438.7,416.0 1450.1,422.2 1435.5,426.5" fill="#cdc7ec"/>
<polygon points="1424.1,420.2 1438.7,416.0 1448.2,421.2 1433.6,425.5" fill="#b5afd1"/>
<ellipse cx="1436.5" cy="420.9" rx="2.8" ry="1.9" fill="#c4bee0" stroke="#a39dbf" stroke-width="0.6"/>
<polygon points="1435.8,430.2 1439.9,429.0 1443.8,431.2 1439.7,432.4" fill="#aaa4c3"/>
<polygon points="1439.9,429.0 1454.6,424.7 1466.2,431.1 1451.6,435.5" fill="#cdc7ec"/>
<polygon points="1439.9,429.0 1454.6,424.7 1464.3,430.0 1449.6,434.4" fill="#b5afd1"/>
<ellipse cx="1452.4" cy="429.7" rx="2.8" ry="1.9" fill="#c4bee0" stroke="#a39dbf" stroke-width="0.6"/>
<polygon points="1452.0,439.3 1456.1,438.0 1460.1,440.2 1456.0,441.5" fill="#aaa4c3"/>
<polygon points="1456.1,438.0 1470.8,433.6 1482.8,440.1 1468.0,444.7" fill="#cdc7ec"/>
<polygon points="1456.1,438.0 1470.8,433.6 1480.8,439.0 1466.0,443.5" fill="#b5afd1"/>
<ellipse cx="1468.8" cy="438.7" rx="2.8" ry="1.9" fill="#c4bee0" stroke="#a39dbf" stroke-width="0.6"/>
<polygon points="1468.6,448.5 1472.7,447.3 1476.8,449.5 1472.6,450.8" fill="#aaa4c3"/>
<polygon points="1472.7,447.3 1487.4,442.7 1499.6,449.4 1484.9,454.0" fill="#cdc7ec"/>
<polygon points="1472.7,447.3 1487.4,442.7 1497.6,448.3 1482.8,452.9" fill="#b5afd1"/>
<ellipse cx="1485.5" cy="447.9" rx="2.8" ry="1.9" fill="#c4bee0" stroke="#a39dbf" stroke-width="0.6"/>
<polygon points="1485.5,458.0 1489.7,456.7 1493.8,459.0 1489.7,460.3" fill="#aaa4c3"/>
<polygon points="1489.7,456.7 1504.4,452.0 1516.9,458.9 1502.1,463.6" fill="#cdc7ec"/>
<polygon points="1489.7,456.7 1504.4,452.0 1514.8,457.7 1500.0,462.5" fill="#b5afd1"/>
<ellipse cx="1502.6" cy="457.4" rx="2.8" ry="1.9" fill="#c4bee0" stroke="#a39dbf" stroke-width="0.6"/>
<polygon points="1515.4,474.7 1525.4,471.4 1529.7,473.8 1519.7,477.1" fill="#aaa4c3"/>
<polygon points="1525.4,471.4 1540.1,466.6 1553.1,473.6 1538.4,478.6" fill="#cdc7ec"/>
<polygon points="1525.4,471.4 1540.1,466.6 1551.0,472.5 1536.2,477.4" fill="#b5afd1"/>
<ellipse cx="1538.5" cy="472.1" rx="2.8" ry="1.9" fill="#c4bee0" stroke="#a39dbf" stroke-width="0.6"/>
<polygon points="1535.8,486.2 1545.8,482.8 1550.3,485.2 1540.3,488.6" fill="#aaa4c3"/>
<polygon points="1545.8,482.8 1560.6,477.7 1574.0,485.0 1559.2,490.1" fill="#cdc7ec"/>
<polygon points="1545.8,482.8 1560.6,477.7 1571.8,483.8 1556.9,488.9" fill="#b5afd1"/>
<ellipse cx="1559.2" cy="483.5" rx="2.8" ry="1.9" fill="#c4bee0" stroke="#a39dbf" stroke-width="0.6"/>
<polygon points="1555.9,497.4 1565.9,493.9 1570.4,496.4 1560.4,499.9" fill="#aaa4c3"/>
<polygon points="1565.9,493.9 1580.8,488.7 1594.5,496.2 1579.6,501.4" fill="#cdc7ec"/>
<polygon points="1565.9,493.9 1580.8,488.7 1592.2,494.9 1577.3,500.2" fill="#b5afd1"/>
<ellipse cx="1579.4" cy="494.6" rx="2.8" ry="1.9" fill="#c4bee0" stroke="#a39dbf" stroke-width="0.6"/>
<polygon points="906.3,324.7 1014.9,301.7 1426.0,572.0 1291.1,631.2" fill="#5f0848"/>
<defs><linearGradient id="rbT" gradientUnits="userSpaceOnUse" x1="787" y1="0" x2="1104" y2="0"><stop offset="0" stop-color="#80e040"/><stop offset="0.1" stop-color="#40d0a0"/><stop offset="0.2" stop-color="#e8a020"/><stop offset="0.32" stop-color="#c02020"/><stop offset="0.45" stop-color="#a01028"/><stop offset="0.72" stop-color="#b01828"/><stop offset="0.84" stop-color="#f09010"/><stop offset="0.93" stop-color="#d0d020"/><stop offset="1" stop-color="#70e040"/></linearGradient><linearGradient id="rbT2" gradientUnits="userSpaceOnUse" x1="787" y1="0" x2="1104" y2="0"><stop offset="0" stop-color="#70e050"/><stop offset="0.12" stop-color="#30c8d0"/><stop offset="0.25" stop-color="#5a90e0"/><stop offset="0.4" stop-color="#8088c8"/><stop offset="0.7" stop-color="#7a86d0"/><stop offset="0.85" stop-color="#40b0e0"/><stop offset="0.95" stop-color="#30d0b0"/><stop offset="1" stop-color="#70e050"/></linearGradient><linearGradient id="rbB" gradientUnits="userSpaceOnUse" x1="1143" y1="0" x2="1540" y2="0"><stop offset="0" stop-color="#80e040"/><stop offset="0.12" stop-color="#e8b020"/><stop offset="0.3" stop-color="#c8101a"/><stop offset="0.68" stop-color="#c8101a"/><stop offset="0.8" stop-color="#f08010"/><stop offset="0.9" stop-color="#d8d820"/><stop offset="1" stop-color="#60d070"/></linearGradient><linearGradient id="rbB2" gradientUnits="userSpaceOnUse" x1="1143" y1="0" x2="1540" y2="0"><stop offset="0" stop-color="#70d060"/><stop offset="0.15" stop-color="#30c0c8"/><stop offset="0.35" stop-color="#6a80d8"/><stop offset="0.7" stop-color="#7a86d0"/><stop offset="0.85" stop-color="#30b8d0"/><stop offset="1" stop-color="#60d070"/></linearGradient></defs>
<polygon points="787.0,335.2 1104.0,276.9 1104.0,280.5 787.0,338.8" fill="#b1abca"/>
<polygon points="787.0,338.8 1104.0,280.5 1104.0,281.9 787.0,340.2" fill="url(#rbT2)"/>
<polygon points="787.0,340.2 1104.0,281.9 1104.0,283.5 787.0,341.8" fill="url(#rbT)"/>
<polygon points="792.0,341.4 1104.0,284.0 1104.0,288.0 792.0,345.4" fill="#5f0848"/>
<polygon points="933.0,302.0 952.0,296.5 963.0,303.5 946.0,309.0" fill="#bcb6d8"/>
<polygon points="1143.0,687.7 1540.0,523.5 1540.0,526.0 1143.0,690.2" fill="#5f0848"/>
<polygon points="1143.0,690.2 1540.0,526.0 1540.0,529.0 1143.0,693.2" fill="url(#rbB)"/>
<polygon points="1143.0,693.2 1540.0,529.0 1540.0,532.5 1143.0,696.7" fill="url(#rbB2)"/>
<polygon points="1143.0,696.7 1540.0,532.5 1540.0,538.0 1143.0,702.2" fill="#c6c0e3"/>
<polygon points="1143.0,702.2 1540.0,538.0 1540.0,540.0 1143.0,704.2" fill="#bcb5dc"/>
<polygon points="1356.7,618.5 1394.0,604.0 1413.8,620.0 1379.0,637.0" fill="#c6c0e3"/>
<ellipse cx="1381.6" cy="614" rx="5" ry="3.5" fill="#b9b2d6"/>
<rect x="942.3" y="342.6" width="2" height="1.7" fill="#f0e8f6" opacity="0.25"/>
<rect x="952.6" y="350.6" width="2" height="1.7" fill="#f0e8f6" opacity="0.25"/>
<rect x="963.2" y="358.9" width="2" height="1.7" fill="#f0e8f6" opacity="0.25"/>
<rect x="974.1" y="367.4" width="2" height="1.7" fill="#f0e8f6" opacity="0.26"/>
<rect x="985.3" y="376.2" width="2" height="1.7" fill="#f0e8f6" opacity="0.32"/>
<rect x="996.9" y="385.3" width="2" height="1.7" fill="#f0e8f6" opacity="0.38"/>
<rect x="1008.8" y="394.6" width="2" height="1.7" fill="#f0e8f6" opacity="0.44"/>
<rect x="1021.1" y="404.2" width="2" height="1.7" fill="#f0e8f6" opacity="0.51"/>
<rect x="1033.8" y="414.1" width="2" height="1.7" fill="#f0e8f6" opacity="0.57"/>
<rect x="1047.0" y="424.4" width="2" height="1.7" fill="#f0e8f6" opacity="0.63"/>
<rect x="1060.5" y="435.0" width="2" height="1.7" fill="#f0e8f6" opacity="0.69"/>
<rect x="1074.5" y="445.9" width="2" height="1.7" fill="#f0e8f6" opacity="0.75"/>
<rect x="1089.0" y="457.3" width="2" height="1.7" fill="#f0e8f6" opacity="0.81"/>
<rect x="1104.0" y="469.0" width="2" height="1.7" fill="#f0e8f6" opacity="0.87"/>
<rect x="1119.5" y="481.1" width="2" height="1.7" fill="#f0e8f6" opacity="0.93"/>
<rect x="1135.6" y="493.7" width="2" height="1.7" fill="#f0e8f6" opacity="0.99"/>
<rect x="1152.3" y="506.7" width="2" height="1.7" fill="#f0e8f6" opacity="1.00"/>
<rect x="1169.6" y="520.2" width="2" height="1.7" fill="#f0e8f6" opacity="1.00"/>
<rect x="1187.5" y="534.3" width="2" height="1.7" fill="#f0e8f6" opacity="1.00"/>
<rect x="1206.2" y="548.8" width="2" height="1.7" fill="#f0e8f6" opacity="1.00"/>
<rect x="1225.6" y="564.0" width="2" height="1.7" fill="#f0e8f6" opacity="1.00"/>
<rect x="1245.7" y="579.8" width="2" height="1.7" fill="#f0e8f6" opacity="1.00"/>
<rect x="1266.8" y="596.2" width="2" height="1.7" fill="#f0e8f6" opacity="1.00"/>
<rect x="1288.7" y="613.3" width="2" height="1.7" fill="#f0e8f6" opacity="1.00"/>
<rect x="957.9" y="339.1" width="2" height="1.7" fill="#f0e8f6" opacity="0.25"/>
<rect x="968.3" y="347.0" width="2" height="1.7" fill="#f0e8f6" opacity="0.25"/>
<rect x="979.0" y="355.2" width="2" height="1.7" fill="#f0e8f6" opacity="0.25"/>
<rect x="990.1" y="363.6" width="2" height="1.7" fill="#f0e8f6" opacity="0.26"/>
<rect x="1001.5" y="372.3" width="2" height="1.7" fill="#f0e8f6" opacity="0.32"/>
<rect x="1013.2" y="381.2" width="2" height="1.7" fill="#f0e8f6" opacity="0.38"/>
<rect x="1025.3" y="390.4" width="2" height="1.7" fill="#f0e8f6" opacity="0.44"/>
<rect x="1037.7" y="399.8" width="2" height="1.7" fill="#f0e8f6" opacity="0.51"/>
<rect x="1050.6" y="409.6" width="2" height="1.7" fill="#f0e8f6" opacity="0.57"/>
<rect x="1063.9" y="419.7" width="2" height="1.7" fill="#f0e8f6" opacity="0.63"/>
<rect x="1077.6" y="430.1" width="2" height="1.7" fill="#f0e8f6" opacity="0.69"/>
<rect x="1091.8" y="440.9" width="2" height="1.7" fill="#f0e8f6" opacity="0.75"/>
<rect x="1106.4" y="452.0" width="2" height="1.7" fill="#f0e8f6" opacity="0.81"/>
<rect x="1121.6" y="463.5" width="2" height="1.7" fill="#f0e8f6" opacity="0.87"/>
<rect x="1137.2" y="475.5" width="2" height="1.7" fill="#f0e8f6" opacity="0.93"/>
<rect x="1153.5" y="487.8" width="2" height="1.7" fill="#f0e8f6" opacity="0.99"/>
<rect x="1170.3" y="500.6" width="2" height="1.7" fill="#f0e8f6" opacity="1.00"/>
<rect x="1187.8" y="513.9" width="2" height="1.7" fill="#f0e8f6" opacity="1.00"/>
<rect x="1205.9" y="527.6" width="2" height="1.7" fill="#f0e8f6" opacity="1.00"/>
<rect x="1224.7" y="541.9" width="2" height="1.7" fill="#f0e8f6" opacity="1.00"/>
<rect x="1244.3" y="556.8" width="2" height="1.7" fill="#f0e8f6" opacity="1.00"/>
<rect x="1264.6" y="572.3" width="2" height="1.7" fill="#f0e8f6" opacity="1.00"/>
<rect x="1285.8" y="588.3" width="2" height="1.7" fill="#f0e8f6" opacity="1.00"/>
<rect x="1307.8" y="605.1" width="2" height="1.7" fill="#f0e8f6" opacity="1.00"/>
<rect x="973.2" y="335.7" width="2" height="1.7" fill="#f0e8f6" opacity="0.25"/>
<rect x="983.8" y="343.5" width="2" height="1.7" fill="#f0e8f6" opacity="0.25"/>
<rect x="994.6" y="351.6" width="2" height="1.7" fill="#f0e8f6" opacity="0.25"/>
<rect x="1005.8" y="359.8" width="2" height="1.7" fill="#f0e8f6" opacity="0.26"/>
<rect x="1017.4" y="368.4" width="2" height="1.7" fill="#f0e8f6" opacity="0.32"/>
<rect x="1029.2" y="377.1" width="2" height="1.7" fill="#f0e8f6" opacity="0.38"/>
<rect x="1041.5" y="386.2" width="2" height="1.7" fill="#f0e8f6" opacity="0.44"/>
<rect x="1054.1" y="395.5" width="2" height="1.7" fill="#f0e8f6" opacity="0.51"/>
<rect x="1067.1" y="405.1" width="2" height="1.7" fill="#f0e8f6" opacity="0.57"/>
<rect x="1080.5" y="415.1" width="2" height="1.7" fill="#f0e8f6" opacity="0.63"/>
<rect x="1094.4" y="425.3" width="2" height="1.7" fill="#f0e8f6" opacity="0.69"/>
<rect x="1108.7" y="435.9" width="2" height="1.7" fill="#f0e8f6" opacity="0.75"/>
<rect x="1123.5" y="446.9" width="2" height="1.7" fill="#f0e8f6" opacity="0.81"/>
<rect x="1138.8" y="458.2" width="2" height="1.7" fill="#f0e8f6" opacity="0.87"/>
<rect x="1154.6" y="469.9" width="2" height="1.7" fill="#f0e8f6" opacity="0.93"/>
<rect x="1171.0" y="482.1" width="2" height="1.7" fill="#f0e8f6" opacity="0.99"/>
<rect x="1188.0" y="494.6" width="2" height="1.7" fill="#f0e8f6" opacity="1.00"/>
<rect x="1205.6" y="507.7" width="2" height="1.7" fill="#f0e8f6" opacity="1.00"/>
<rect x="1223.9" y="521.2" width="2" height="1.7" fill="#f0e8f6" opacity="1.00"/>
<rect x="1242.9" y="535.2" width="2" height="1.7" fill="#f0e8f6" opacity="1.00"/>
<rect x="1262.6" y="549.8" width="2" height="1.7" fill="#f0e8f6" opacity="1.00"/>
<rect x="1283.0" y="564.9" width="2" height="1.7" fill="#f0e8f6" opacity="1.00"/>
<rect x="1304.3" y="580.7" width="2" height="1.7" fill="#f0e8f6" opacity="1.00"/>
<rect x="1326.5" y="597.1" width="2" height="1.7" fill="#f0e8f6" opacity="1.00"/>
<rect x="988.3" y="332.3" width="2" height="1.7" fill="#f0e8f6" opacity="0.25"/>
<rect x="999.0" y="340.0" width="2" height="1.7" fill="#f0e8f6" opacity="0.25"/>
<rect x="1010.0" y="348.0" width="2" height="1.7" fill="#f0e8f6" opacity="0.25"/>
<rect x="1021.3" y="356.1" width="2" height="1.7" fill="#f0e8f6" opacity="0.26"/>
<rect x="1033.0" y="364.5" width="2" height="1.7" fill="#f0e8f6" opacity="0.32"/>
<rect x="1045.0" y="373.2" width="2" height="1.7" fill="#f0e8f6" opacity="0.38"/>
<rect x="1057.4" y="382.1" width="2" height="1.7" fill="#f0e8f6" opacity="0.44"/>
<rect x="1070.1" y="391.3" width="2" height="1.7" fill="#f0e8f6" opacity="0.51"/>
<rect x="1083.3" y="400.8" width="2" height="1.7" fill="#f0e8f6" opacity="0.57"/>
<rect x="1096.9" y="410.5" width="2" height="1.7" fill="#f0e8f6" opacity="0.63"/>
<rect x="1110.9" y="420.6" width="2" height="1.7" fill="#f0e8f6" opacity="0.69"/>
<rect x="1125.3" y="431.1" width="2" height="1.7" fill="#f0e8f6" opacity="0.75"/>
<rect x="1140.3" y="441.8" width="2" height="1.7" fill="#f0e8f6" opacity="0.81"/>
<rect x="1155.7" y="453.0" width="2" height="1.7" fill="#f0e8f6" opacity="0.87"/>
<rect x="1171.7" y="464.5" width="2" height="1.7" fill="#f0e8f6" opacity="0.93"/>
<rect x="1188.2" y="476.4" width="2" height="1.7" fill="#f0e8f6" opacity="0.99"/>
<rect x="1205.4" y="488.8" width="2" height="1.7" fill="#f0e8f6" opacity="1.00"/>
<rect x="1223.1" y="501.5" width="2" height="1.7" fill="#f0e8f6" opacity="1.00"/>
<rect x="1241.5" y="514.8" width="2" height="1.7" fill="#f0e8f6" opacity="1.00"/>
<rect x="1260.6" y="528.6" width="2" height="1.7" fill="#f0e8f6" opacity="1.00"/>
<rect x="1280.5" y="542.9" width="2" height="1.7" fill="#f0e8f6" opacity="1.00"/>
<rect x="1301.1" y="557.7" width="2" height="1.7" fill="#f0e8f6" opacity="1.00"/>
<rect x="1322.5" y="573.2" width="2" height="1.7" fill="#f0e8f6" opacity="1.00"/>
<rect x="1344.8" y="589.3" width="2" height="1.7" fill="#f0e8f6" opacity="1.00"/>
<rect x="1003.2" y="329.0" width="2" height="1.7" fill="#f0e8f6" opacity="0.25"/>
<rect x="1014.0" y="336.6" width="2" height="1.7" fill="#f0e8f6" opacity="0.25"/>
<rect x="1025.2" y="344.4" width="2" height="1.7" fill="#f0e8f6" opacity="0.25"/>
<rect x="1036.6" y="352.5" width="2" height="1.7" fill="#f0e8f6" opacity="0.26"/>
<rect x="1048.4" y="360.7" width="2" height="1.7" fill="#f0e8f6" opacity="0.32"/>
<rect x="1060.6" y="369.3" width="2" height="1.7" fill="#f0e8f6" opacity="0.38"/>
<rect x="1073.1" y="378.1" width="2" height="1.7" fill="#f0e8f6" opacity="0.44"/>
<rect x="1085.9" y="387.1" width="2" height="1.7" fill="#f0e8f6" opacity="0.51"/>
<rect x="1099.2" y="396.5" width="2" height="1.7" fill="#f0e8f6" opacity="0.57"/>
<rect x="1112.9" y="406.1" width="2" height="1.7" fill="#f0e8f6" opacity="0.63"/>
<rect x="1127.1" y="416.0" width="2" height="1.7" fill="#f0e8f6" opacity="0.69"/>
<rect x="1141.7" y="426.3" width="2" height="1.7" fill="#f0e8f6" opacity="0.75"/>
<rect x="1156.8" y="436.9" width="2" height="1.7" fill="#f0e8f6" opacity="0.81"/>
<rect x="1172.3" y="447.8" width="2" height="1.7" fill="#f0e8f6" opacity="0.87"/>
<rect x="1188.5" y="459.1" width="2" height="1.7" fill="#f0e8f6" opacity="0.93"/>
<rect x="1205.1" y="470.9" width="2" height="1.7" fill="#f0e8f6" opacity="0.99"/>
<rect x="1222.4" y="483.0" width="2" height="1.7" fill="#f0e8f6" opacity="1.00"/>
<rect x="1240.3" y="495.6" width="2" height="1.7" fill="#f0e8f6" opacity="1.00"/>
<rect x="1258.8" y="508.6" width="2" height="1.7" fill="#f0e8f6" opacity="1.00"/>
<rect x="1278.1" y="522.1" width="2" height="1.7" fill="#f0e8f6" opacity="1.00"/>
<rect x="1298.0" y="536.1" width="2" height="1.7" fill="#f0e8f6" opacity="1.00"/>
<rect x="1318.8" y="550.7" width="2" height="1.7" fill="#f0e8f6" opacity="1.00"/>
<rect x="1340.3" y="565.9" width="2" height="1.7" fill="#f0e8f6" opacity="1.00"/>
<rect x="1362.8" y="581.6" width="2" height="1.7" fill="#f0e8f6" opacity="1.00"/>
<rect x="1017.9" y="325.7" width="2" height="1.7" fill="#f0e8f6" opacity="0.25"/>
<rect x="1028.8" y="333.2" width="2" height="1.7" fill="#f0e8f6" opacity="0.25"/>
<rect x="1040.1" y="340.9" width="2" height="1.7" fill="#f0e8f6" opacity="0.25"/>
<rect x="1051.7" y="348.9" width="2" height="1.7" fill="#f0e8f6" opacity="0.26"/>
<rect x="1063.6" y="357.0" width="2" height="1.7" fill="#f0e8f6" opacity="0.32"/>
<rect x="1075.8" y="365.4" width="2" height="1.7" fill="#f0e8f6" opacity="0.38"/>
<rect x="1088.5" y="374.1" width="2" height="1.7" fill="#f0e8f6" opacity="0.44"/>
<rect x="1101.5" y="383.0" width="2" height="1.7" fill="#f0e8f6" opacity="0.51"/>
<rect x="1114.9" y="392.2" width="2" height="1.7" fill="#f0e8f6" opacity="0.57"/>
<rect x="1128.7" y="401.7" width="2" height="1.7" fill="#f0e8f6" opacity="0.63"/>
<rect x="1143.0" y="411.5" width="2" height="1.7" fill="#f0e8f6" opacity="0.69"/>
<rect x="1157.7" y="421.6" width="2" height="1.7" fill="#f0e8f6" opacity="0.75"/>
<rect x="1172.9" y="432.0" width="2" height="1.7" fill="#f0e8f6" opacity="0.81"/>
<rect x="1188.7" y="442.8" width="2" height="1.7" fill="#f0e8f6" opacity="0.87"/>
<rect x="1204.9" y="453.9" width="2" height="1.7" fill="#f0e8f6" opacity="0.93"/>
<rect x="1221.7" y="465.4" width="2" height="1.7" fill="#f0e8f6" opacity="0.99"/>
<rect x="1239.1" y="477.3" width="2" height="1.7" fill="#f0e8f6" opacity="1.00"/>
<rect x="1257.1" y="489.7" width="2" height="1.7" fill="#f0e8f6" opacity="1.00"/>
<rect x="1275.8" y="502.5" width="2" height="1.7" fill="#f0e8f6" opacity="1.00"/>
<rect x="1295.2" y="515.8" width="2" height="1.7" fill="#f0e8f6" opacity="1.00"/>
<rect x="1315.2" y="529.5" width="2" height="1.7" fill="#f0e8f6" opacity="1.00"/>
<rect x="1336.1" y="543.8" width="2" height="1.7" fill="#f0e8f6" opacity="1.00"/>
<rect x="1357.8" y="558.7" width="2" height="1.7" fill="#f0e8f6" opacity="1.00"/>
<rect x="1380.3" y="574.1" width="2" height="1.7" fill="#f0e8f6" opacity="1.00"/>
<rect x="1032.3" y="322.5" width="2" height="1.7" fill="#f0e8f6" opacity="0.25"/>
<rect x="1043.4" y="329.9" width="2" height="1.7" fill="#f0e8f6" opacity="0.25"/>
<rect x="1054.8" y="337.5" width="2" height="1.7" fill="#f0e8f6" opacity="0.25"/>
<rect x="1066.5" y="345.3" width="2" height="1.7" fill="#f0e8f6" opacity="0.26"/>
<rect x="1078.5" y="353.4" width="2" height="1.7" fill="#f0e8f6" opacity="0.32"/>
<rect x="1090.9" y="361.7" width="2" height="1.7" fill="#f0e8f6" opacity="0.38"/>
<rect x="1103.6" y="370.2" width="2" height="1.7" fill="#f0e8f6" opacity="0.44"/>
<rect x="1116.8" y="379.0" width="2" height="1.7" fill="#f0e8f6" opacity="0.51"/>
<rect x="1130.3" y="388.0" width="2" height="1.7" fill="#f0e8f6" opacity="0.57"/>
<rect x="1144.3" y="397.4" width="2" height="1.7" fill="#f0e8f6" opacity="0.63"/>
<rect x="1158.7" y="407.0" width="2" height="1.7" fill="#f0e8f6" opacity="0.69"/>
<rect x="1173.5" y="416.9" width="2" height="1.7" fill="#f0e8f6" opacity="0.75"/>
<rect x="1188.9" y="427.2" width="2" height="1.7" fill="#f0e8f6" opacity="0.81"/>
<rect x="1204.7" y="437.8" width="2" height="1.7" fill="#f0e8f6" opacity="0.87"/>
<rect x="1221.1" y="448.8" width="2" height="1.7" fill="#f0e8f6" opacity="0.93"/>
<rect x="1238.0" y="460.1" width="2" height="1.7" fill="#f0e8f6" opacity="0.99"/>
<rect x="1255.5" y="471.8" width="2" height="1.7" fill="#f0e8f6" opacity="1.00"/>
<rect x="1273.6" y="483.9" width="2" height="1.7" fill="#f0e8f6" opacity="1.00"/>
<rect x="1292.4" y="496.5" width="2" height="1.7" fill="#f0e8f6" opacity="1.00"/>
<rect x="1311.9" y="509.5" width="2" height="1.7" fill="#f0e8f6" opacity="1.00"/>
<rect x="1332.1" y="523.0" width="2" height="1.7" fill="#f0e8f6" opacity="1.00"/>
<rect x="1353.1" y="537.1" width="2" height="1.7" fill="#f0e8f6" opacity="1.00"/>
<rect x="1374.8" y="551.6" width="2" height="1.7" fill="#f0e8f6" opacity="1.00"/>
<rect x="1397.5" y="566.8" width="2" height="1.7" fill="#f0e8f6" opacity="1.00"/></g></svg>
<div class="t" style="left:691px;top:239.40px;font-size:13.7px;line-height:13.7px;height:17.7px;color:#111;">VtestL=0 V, VtestR=2 V</div>
<div class="t" style="left:990px;top:239.40px;font-size:13.7px;line-height:13.7px;height:17.7px;color:#111;">Volume: Displacement field, X-component (µm)</div>
<div class="t" style="left:687px;top:786.00px;font-size:13px;line-height:13px;height:17px;color:#2e5fa8;">Messages</div>
<div class="t" style="left:793px;top:786.00px;font-size:13px;line-height:13px;height:17px;color:#3a3a3a;">Progress</div>
<div class="t" style="left:872px;top:786.00px;font-size:13px;line-height:13px;height:17px;color:#3a3a3a;">Log</div>
<div class="a" style="left:675px;top:808px;width:917px;height:1px;background:#d6d6d6"></div>
<div class="a" style="left:683px;top:806px;width:87px;height:2px;background:#2b7bcb"></div>
<div class="a" style="left:679px;top:833px;width:909px;height:27px;background:#f9fafd;border:1px solid #cfcfcf"></div>
<div class="t" style="left:861.5px;width:200px;text-align:center;top:876.69px;font-size:11px;line-height:11px;height:15px;color:#1a1a1a;">4.91 GB | 6.35 GB</div>
<svg style="left:0;top:0" width="1598" height="897"><defs><linearGradient id="appg" x1="0" x2="1"><stop offset="0" stop-color="#f0e040"/><stop offset="0.45" stop-color="#e8d830"/><stop offset="0.55" stop-color="#2a7fe0"/><stop offset="1" stop-color="#10206a"/></linearGradient></defs><defs><linearGradient id="appb" x1="0" y1="0" x2="1" y2="1"><stop offset="0" stop-color="#2a70d8"/><stop offset="1" stop-color="#0a1a70"/></linearGradient></defs><circle cx="15.5" cy="15.5" r="6.5" fill="#e8e8e8" opacity="0.7"/><rect x="10.7" y="11.5" width="9.5" height="7.8" rx="2.2" fill="url(#appb)"/><path d="M11.8 12.6 L17 15.4 L11.8 18.2Z" fill="#f0e040"/><path d="M43.7 8.4 H50.5 L54.5 12.4 V22.3 H43.7Z M50.5 8.4 V12.4 H54.5" fill="#fff" stroke="#3589cf" stroke-width="1.2"/><path d="M71 10 H76 L77.5 11.5 H83 V14 H75.5 L71.6 21.2 Z" fill="#3589cf"/><path d="M76.5 14.5 H87 L82.5 22 H72.5 Z" fill="#3589cf"/><path d="M102.6 9.5 H115.5 V22.3 H104.6 L102.6 20.3Z" fill="#fff" stroke="#3589cf" stroke-width="1.2"/><rect x="105.3" y="9.5" width="8" height="5.8" fill="none" stroke="#3589cf" stroke-width="1.1"/><rect x="106.6" y="18.2" width="5" height="4" fill="none" stroke="#3589cf" stroke-width="1.1"/><path d="M131.6 9.5 H144.5 V22.3 H133.6 L131.6 20.3Z" fill="#fff" stroke="#3589cf" stroke-width="1.2"/><rect x="134.3" y="9.5" width="8" height="5.8" fill="none" stroke="#3589cf" stroke-width="1.1"/><rect x="135.6" y="18.2" width="5" height="4" fill="none" stroke="#3589cf" stroke-width="1.1"/><path d="M137.5 13 L146 21.5" stroke="#3589cf" stroke-width="2.6"/><path d="M136.8 12.2 l1.5 0.3 -1.2 1.2z" fill="#777"/><path d="M166 11 L174 15.4 L166 19.8Z" fill="#1fa98a"/><path d="M190 13.6 L194.8 10 V17.2Z" fill="#3589cf"/><path d="M194 13.6 H199.5 A3.7 3.7 0 0 1 199.5 21 H198" fill="none" stroke="#3589cf" stroke-width="1.3"/><path d="M212.8 16 L215.4 19 L218.0 16" fill="none" stroke="#333" stroke-width="1.3"/><path d="M244.5 13.4 L239.5 9.9 V16.9Z" fill="#c2c2c2"/><path d="M240 13.4 H234 A3.7 3.7 0 0 0 234 20.9 H235.5" fill="none" stroke="#c2c2c2" stroke-width="1.1"/><path d="M252.8 16 L255.4 19 L258.0 16" fill="none" stroke="#777" stroke-width="1.2"/><g stroke="#c4c4c4" stroke-width="1.1" fill="none"><path d="M273.5 9 L281.5 19.5 M284 9 L276 19.5"/><circle cx="274.5" cy="21" r="2.3"/><circle cx="282.5" cy="21" r="2.3"/></g><rect x="301.5" y="8.5" width="10.5" height="12" fill="#fff" stroke="#8a8a8a" stroke-width="1"/><path d="M303.7 12h1M303.7 14h1M303.7 16h1" stroke="#999" stroke-width="0.9"/><rect x="306.5" y="11.2" width="10.2" height="12.2" fill="#fff" stroke="#3589cf" stroke-width="1.2"/><path d="M309 15.5h5.5M309 17.4h5.5M309 19.3h5.5" stroke="#3589cf" stroke-width="1.1"/><rect x="332.5" y="9.5" width="10.5" height="11.5" rx="1.2" fill="none" stroke="#c4c4c4" stroke-width="1.2"/><path d="M334.5 10.5 q3 -2.5 6.5 0" fill="none" stroke="#c4c4c4" stroke-width="1.2"/><rect x="338.5" y="14.2" width="8" height="9.2" fill="#f4f4f4" stroke="#c4c4c4" stroke-width="1.2"/><rect x="361.5" y="8.5" width="10.5" height="12" fill="#fff" stroke="#3589cf" stroke-width="1.2"/><rect x="366.5" y="11.2" width="10.5" height="12.3" fill="#fff" stroke="#3589cf" stroke-width="1.2"/><path d="M364 17h8" stroke="#3589cf" stroke-width="1.6"/><path d="M370 14 L374.2 17 L370 20Z" fill="#3589cf"/><path d="M393 9.2h11M397 8.2h3" stroke="#3589cf" stroke-width="1.2"/><path d="M393 11h11 v11.5 q0 1.3 -1.3 1.3 h-8.4 q-1.3 0 -1.3 -1.3z" fill="#3589cf"/><path d="M396.3 13v8M398.5 13v8M400.7 13v8" stroke="#f0f0f0" stroke-width="0.9"/><rect x="422.5" y="9.5" width="13.5" height="13" fill="none" stroke="#bdbdbd" stroke-width="1" stroke-dasharray="2 1.5"/><rect x="425.5" y="12" width="7" height="7" fill="#c4c4c4"/><path d="M430 16 L437 23 M430 16 l0.5 5 l4.5 -4.5z" stroke="#c4c4c4" stroke-width="1" fill="#c4c4c4"/><rect x="452.5" y="9.5" width="13" height="13" fill="none" stroke="#c4c4c4" stroke-width="1" stroke-dasharray="2 1.5"/><path d="M454 12h10v8h-10z" fill="#cfcfcf"/><path d="M453 8 L459 23" stroke="#c8c8c8" stroke-width="1.3"/><rect x="481.5" y="8.5" width="11" height="12.3" rx="1" fill="#fff" stroke="#777" stroke-width="1.1"/><path d="M484 11.5h5M484 13.5h4.5M484 15.5h3" stroke="#666" stroke-width="0.9"/><path d="M484 17.4h2.5" stroke="#3589cf" stroke-width="0.9"/><circle cx="491" cy="18.6" r="3" fill="#fff" stroke="#3589cf" stroke-width="1.4"/><path d="M493 20.6 L496.5 23.6" stroke="#3589cf" stroke-width="2"/><rect x="511.5" y="8.7" width="10.5" height="14.8" rx="1" fill="#fff" stroke="#777" stroke-width="1.1"/><path d="M511.5 9.3h10.5" stroke="#777" stroke-width="1.3"/><path d="M513.5 12.4h5.5M514 18.4h2" stroke="#1a9a80" stroke-width="1"/><path d="M515 14.4h3M515 20.4h2" stroke="#555" stroke-width="0.9"/><circle cx="521" cy="18" r="3.2" fill="#fff" stroke="#3589cf" stroke-width="1.4"/><path d="M523 20 L526.5 23.2" stroke="#3589cf" stroke-width="2"/><path d="M547 12.3h7" stroke="#333" stroke-width="1.1"/><path d="M547 16 L550.5 19.8 L554 16" fill="none" stroke="#333" stroke-width="1.2"/><path d="M1481.5 16.5h11.2" stroke="#222" stroke-width="1"/><rect x="1526" y="11.2" width="10" height="10" fill="none" stroke="#222" stroke-width="1"/><path d="M1570 10.5 L1580.8 21.5 M1580.8 10.5 L1570 21.5" stroke="#222" stroke-width="1.05"/><path d="M44.2 94.8 L52.9 75.3 L61.6 94.8 M47.5 87.3 H58.3" fill="none" stroke="#1ba585" stroke-width="1.7"/><path d="M112.5 73.2 L120.5 73.2 L134.8 79 L134.8 98.8 L120.5 98.8 L112.5 92.5Z" fill="#e8962a"/><path d="M112.5 73.2 H120.5 L134.8 79 H120.5Z" fill="#fff" stroke="#e8962a" stroke-width="0.9"/><g fill="#fff" stroke="#e8962a" stroke-width="1"><rect x="120.5" y="79.00" width="14" height="4.95"/><rect x="120.5" y="83.95" width="14" height="4.95"/><rect x="120.5" y="88.90" width="14" height="4.95"/><rect x="120.5" y="93.85" width="14" height="4.95"/></g><rect x="127" y="80.90" width="1.6" height="1.4" fill="#555"/><rect x="127" y="85.85" width="1.6" height="1.4" fill="#555"/><rect x="127" y="90.80" width="1.6" height="1.4" fill="#555"/><rect x="127" y="95.75" width="1.6" height="1.4" fill="#555"/><path d="M201.8 75 H218.5 L224.2 79.5 V95.8 H206.2 L201.8 91.5Z" fill="#3589cf"/><path d="M202.3 75.5 L206.8 79.5 H224 M206.8 79.5 V95.8" fill="none" stroke="#fff" stroke-width="0.8"/><g fill="none" stroke="#3589cf" stroke-width="1.05"><path d="M285.3 85.3 L294.7 74.8 H303.9 L314 85.3 L303.9 95.8 H294.7Z"/><path d="M303.9 74.8 L293.8 85.3 L303.9 95.8 M294.7 74.8 L304.6 85.3 L294.7 95.8 M285.3 85.3 H293.8 M304.6 85.3 H314" stroke-width="0.85"/></g><text x="390" y="94" font-family="Liberation Sans" font-size="23" fill="#3a90d6">P</text><text x="404" y="94" font-family="Liberation Sans" font-size="13" fill="#3a90d6">i</text><text x="443.5" y="83.3" font-family="Liberation Sans" font-size="13" fill="#3a90d6">a=</text><path d="M462.8 78.2 L465.40000000000003 81.2 L468.0 78.2" fill="none" stroke="#333" stroke-width="1.3"/><text x="479" y="83.3" font-family="Liberation Sans" font-size="13" fill="#3a7fc4">Δu</text><path d="M499 78.2 L501.6 81.2 L504.2 78.2" fill="none" stroke="#333" stroke-width="1.3"/><text x="443" y="110" font-family="Liberation Sans" font-size="12.5" fill="#3a90d6">f(x)</text><path d="M463 104 L465.6 107 L468.2 104" fill="none" stroke="#333" stroke-width="1.3"/><text x="445.5" y="136.6" font-family="Liberation Sans" font-size="12" fill="#c6c6c6">P</text><text x="453" y="136.8" font-family="Liberation Sans" font-size="8" fill="#c6c6c6">i</text><path d="M397 127 L399.6 130 L402.2 127" fill="none" stroke="#333" stroke-width="1.3"/><path d="M537.2 77 H552 L556.3 80 V96 H541 L537.2 92.8Z" fill="#e0603e"/><path d="M541.3 80 H556 M541.3 80 V96 M541.3 88 H556.3 M548.8 80 V96 M537.4 77.2 L541.3 80" stroke="#fff" stroke-width="0.7" fill="none"/><rect x="575.5" y="73.5" width="14" height="11" fill="#fff" stroke="#666" stroke-width="1"/><path d="M575.5 75.5h14M578 74v10.5" stroke="#666" stroke-width="0.9"/><path d="M581 80h8" stroke="#e04a20" stroke-width="1.3"/><path d="M580.3 80 L583.5 77.5 V82.5Z" fill="#e04a20"/><path d="M577 106 V102 H587 M589 104 V108 H579" fill="none" stroke="#cdcdcd" stroke-width="1.8"/><path d="M586 99.5 l3 2.5 l-3 2.5z M580 105.5 l-3 2.5 l3 2.5z" fill="#cdcdcd"/><path d="M594.8 104 L597.4 107 L600.0 104" fill="none" stroke="#666" stroke-width="1.1"/><rect x="576.5" y="124.5" width="12" height="13" fill="#e8f0f4" stroke="#e0603e" stroke-width="1.1"/><path d="M579.5 125v12M582.5 125v12M585.5 125v12" stroke="#e0603e" stroke-width="1"/><rect x="650.1" y="74.69999999999999" width="6.2" height="5.8" rx="2" fill="#eea33a"/><rect x="643.3" y="78.5" width="6.2" height="5.8" rx="2" fill="#eea33a"/><rect x="656.9" y="78.5" width="6.2" height="5.8" rx="2" fill="#eea33a"/><rect x="650.1" y="82.5" width="6.2" height="5.8" rx="2" fill="#eea33a"/><rect x="643.3" y="86.3" width="6.2" height="5.8" rx="2" fill="#eea33a"/><rect x="656.9" y="85.89999999999999" width="6.2" height="5.8" rx="2" fill="#d98420"/><rect x="650.1" y="89.89999999999999" width="6.2" height="5.8" rx="2" fill="#d98420"/><path d="M661.5 90v8 M658 95 l3.5 3.5 l3.5 -3.5 M657.5 100.5h8" fill="none" stroke="#777" stroke-width="1.2"/><g fill="#e4e8f0" stroke="#3589cf" stroke-width="1"><rect x="706.5" y="72.2" width="9" height="3.2"/><rect x="702.2" y="75.4" width="16" height="5.3" fill="#c8d0e0"/><rect x="706.5" y="80.7" width="9" height="3"/><rect x="709" y="83.7" width="4" height="2"/></g><path d="M817.7 77.6 L820.45 80.8 L823.2 77.6" fill="none" stroke="#333" stroke-width="1.3"/><g fill="none" stroke="#aaa" stroke-width="0.9"><ellipse cx="710" cy="104.5" rx="7" ry="3" transform="rotate(30 710 104.5)"/><ellipse cx="710" cy="104.5" rx="7" ry="3" transform="rotate(-30 710 104.5)"/><ellipse cx="710" cy="104.5" rx="2.5" ry="7"/></g><circle cx="710" cy="104" r="1.3" fill="#3589cf"/><path d="M715.5 106.5v5 M713 109.5l2.5 2.5l2.5 -2.5 M712.5 113h6" fill="none" stroke="#3589cf" stroke-width="1.1"/><text x="702" y="132" font-family="Liberation Sans" font-size="11" fill="#3589cf">Δu</text><path d="M715.5 132v5 M713 134.5l2.5 2.5l2.5 -2.5 M712.5 138.3h6" fill="none" stroke="#3589cf" stroke-width="1.1"/><path d="M858.2 77 H873 L877 80 V96 H862 L858.2 92.8Z" fill="#858585"/><path d="M862.2 80 H877 M862.2 80 V96 M862.2 88 H877 M869.5 80 V96 M858.4 77.2 L862.2 80" stroke="#fff" stroke-width="0.7" fill="none"/><path d="M913.8 72.3 L929.2 98.6 H898.8Z" fill="#e0e0e0" stroke="#8a8a8a" stroke-width="1"/><g stroke="#9a9a9a" stroke-width="0.6"><path d="M906 85.5 H921.6 M902 92 H925.6 M910 78.9 H917.6"/><path d="M906 85.5 L913.8 98.6 M902 92 L906 98.6 M910 78.9 L921.6 98.6"/><path d="M921.6 85.5 L913.8 98.6 M925.6 92 L921.6 98.6 M917.6 78.9 L906 98.6"/></g><path d="M917.5 127 L920.1 130 L922.7 127" fill="none" stroke="#333" stroke-width="1.3"/><path d="M962 76.8h9M962 80.2h9" stroke="#1a8ea6" stroke-width="1.6"/><g fill="none" stroke="#1a8ea6" stroke-width="1.1"><path d="M958 104.0 q2 -3 4.5 0"/><circle cx="965.8" cy="104.3" r="2.6"/><circle cx="971.3" cy="104.3" r="2.6"/></g><path d="M1074 104 L1076.6 107 L1079.2 104" fill="none" stroke="#333" stroke-width="1.3"/><g fill="none" stroke="#1a8ea6" stroke-width="1.1"><path d="M958 128.0 q2 -3 4.5 0"/><circle cx="965.8" cy="128.3" r="2.6"/><circle cx="971.3" cy="128.3" r="2.6"/></g><path d="M971.5 131v5 M969 133.8l2.5 2.5l2.5 -2.5 M968.5 138.3h6" fill="none" stroke="#1a8ea6" stroke-width="1.1"/><path d="M1107 72.5 H1118 L1121.8 75.7 V85.6 H1111 L1107 82.5Z" fill="#c04e9e"/><path d="M1107.3 72.8 L1111 75.7 H1121.8 M1111 75.7 V85.6" stroke="#e8b0d8" stroke-width="0.7" fill="none"/><path d="M1243.7 77.6 L1246.45 80.8 L1249.2 77.6" fill="none" stroke="#333" stroke-width="1.3"/><g fill="#f4f4f4" stroke="#888" stroke-width="0.9"><rect x="1108.5" y="97.5" width="8" height="9"/><rect x="1110.5" y="99.5" width="8" height="9"/><rect x="1112.5" y="101.5" width="9" height="9"/></g><rect x="1114" y="103" width="6" height="5.5" fill="#c04e9e"/><path d="M1106 108 L1108.5 111 H1121.8" stroke="#888" stroke-width="1" fill="none"/><path d="M1212.7 104 L1215.45 107.2 L1218.2 104" fill="none" stroke="#333" stroke-width="1.3"/><rect x="1106.3" y="124.8" width="13" height="9.8" fill="#fff" stroke="#888" stroke-width="1"/><rect x="1108" y="127" width="9.5" height="6" fill="#c04e9e"/><path d="M1120 132v5 M1117.5 134.8l2.5 2.5l2.5 -2.5 M1117 138.5h6" fill="none" stroke="#3589cf" stroke-width="1.1"/><g fill="#fff" stroke="#3589cf" stroke-width="1.1"><rect x="1289.5" y="73.3" width="21.5" height="18"/><rect x="1298.5" y="81.3" width="21.5" height="15.5"/></g><rect x="1290.5" y="74.3" width="19.5" height="2" fill="#cdd8ea"/><rect x="1299.5" y="82.3" width="19.5" height="2" fill="#cdd8ea"/><path d="M1300.8 127 L1303.55 130.2 L1306.3 127" fill="none" stroke="#333" stroke-width="1.3"/><rect x="1359.5" y="76.5" width="25.5" height="19" fill="#fff" stroke="#3589cf" stroke-width="1.1"/><rect x="1360.5" y="77.5" width="23.5" height="2.2" fill="#cdd8ea"/><path d="M1377 85.5 A4.7 4.7 0 1 1 1372.2 81.5" fill="none" stroke="#3589cf" stroke-width="1.1"/><path d="M1377.8 80.3 L1377.8 85.5 L1373.2 83.5Z" fill="#3589cf"/><path d="M1394 127 L1396.75 130.2 L1399.5 127" fill="none" stroke="#333" stroke-width="1.3"/></svg>
<svg style="left:0;top:0" width="1598" height="897"><path d="M16.0 261.3 L19.7 265.1 L23.4 261.3" fill="none" stroke="#222" stroke-width="1.2"/><path d="M31.5 263 L37.5 257 H42.5 L46.0 263 L40.0 269 H35.0Z" fill="#3589cf"/><path d="M32.0 263 H35.5 L40.0 268.5 M35.5 263 L40.5 257.5" stroke="#fff" stroke-width="0.8" fill="none"/><path d="M37 278.3 L40.6 281.5 L37 284.7" fill="none" stroke="#555" stroke-width="1.15"/><g fill="none" stroke="#3589cf" stroke-width="0.9"><circle cx="58.0" cy="281.5" r="7"/><ellipse cx="58.0" cy="281.5" rx="3.2" ry="7"/><path d="M58.0 274.5 V288.5 M51.3 281.5 H64.7 M52.5 277.7 H63.5 M52.5 285.3 H63.5"/></g><path d="M36.0 297.3 L39.7 301.1 L43.4 297.3" fill="none" stroke="#222" stroke-width="1.2"/><path d="M51.1 293 H61.99999999999999 L65.6 295.88 V305.6 H54.7 L51.1 302.72Z" fill="#3589cf"/><path d="M51.6 293.4 L54.7 295.88 H65.6 M54.7 295.88 V305.6" fill="none" stroke="#fff" stroke-width="0.8"/><path d="M57 314.3 L60.6 317.5 L57 320.7" fill="none" stroke="#555" stroke-width="1.15"/><path d="M72.7 313.8h9.5M72.7 317h9.5M72.7 320.2h9.5" stroke="#3589cf" stroke-width="1.6"/><path d="M57 332.3 L60.6 335.5 L57 338.7" fill="none" stroke="#555" stroke-width="1.15"/><rect x="71.0" y="328.5" width="14.5" height="15" fill="#fff" stroke="#3aa040" stroke-width="1"/><path d="M73.5 342.5 L78.7 330 L83.5 342.5 M72.0 331.5 Q78.5 340 84.5 333" fill="none" stroke="#e05a30" stroke-width="0.9"/><path d="M57 350.3 L60.6 353.5 L57 356.7" fill="none" stroke="#555" stroke-width="1.15"/><rect x="76.0" y="346.5" width="4" height="4" fill="#f2a626"/><rect x="71.0" y="350.5" width="4" height="4" fill="#f2a626"/><rect x="76.0" y="350.5" width="4" height="4" fill="#f2a626"/><rect x="81.0" y="350.5" width="4" height="4" fill="#f2a626"/><rect x="71.0" y="355" width="4" height="4" fill="#d87a18"/><rect x="76.0" y="355" width="4" height="4" fill="#d87a18"/><rect x="81.0" y="355.5" width="4" height="4" fill="#d87a18"/><rect x="76.0" y="359" width="4" height="1.3" fill="#c87018"/><path d="M57 368.3 L60.6 371.5 L57 374.7" fill="none" stroke="#555" stroke-width="1.15"/><path d="M76.5 365 H86.5 L80.5 379 H70.5Z" fill="#a0a0a0"/><g stroke="#fff" stroke-width="0.7"><path d="M74.5 369.5 H84.5 M72.5 374 H82.5"/><path d="M80.0 365 L74.0 379 M83.5 365 L77.5 379"/></g><path d="M71.0 367h4M81.5 378h4.5" stroke="#3589cf" stroke-width="0.9"/><path d="M75.5 367 l-1.5 -1.3v2.6z M86.5 378 l-1.5 -1.3v2.6z" fill="#3589cf"/><path d="M57 386.3 L60.6 389.5 L57 392.7" fill="none" stroke="#555" stroke-width="1.15"/><g fill="#ece7de" stroke="#3589cf" stroke-width="0.9"><rect x="74.5" y="382.5" width="8" height="3"/><rect x="71.0" y="385.5" width="15" height="5.5" fill="#c5cde0"/><rect x="74.5" y="391" width="8" height="3"/><rect x="76.5" y="394" width="3.6" height="1.8"/></g><path d="M57 404.3 L60.6 407.5 L57 410.7" fill="none" stroke="#555" stroke-width="1.15"/><path d="M71.5 400.5 L83.5 407.5 L78.5 407.8 L85.0 415.5 L72.5 408.8 L77.5 408.3Z" fill="#3a7fc8"/><path d="M56.0 423.3 L59.7 427.1 L63.4 423.3" fill="none" stroke="#222" stroke-width="1.2"/><g fill="none" stroke="#aaa" stroke-width="0.7"><ellipse cx="78.5" cy="423" rx="4.5" ry="2" transform="rotate(30 78.5 423)"/><ellipse cx="78.5" cy="423" rx="4.5" ry="2" transform="rotate(-30 78.5 423)"/></g><circle cx="78.5" cy="423" r="1.2" fill="#3a9a40"/><path d="M78.5 426 L72.0 430 M78.5 426 L76.0 430 M78.5 426 L80.0 430 M78.5 426 L84.0 430" stroke="#888" stroke-width="0.7"/><rect x="70.5" y="430" width="2.8" height="2.8" fill="#3589cf"/><rect x="74.7" y="430" width="2.8" height="2.8" fill="#3aa040"/><rect x="78.7" y="430" width="2.8" height="2.8" fill="#e06030"/><rect x="82.9" y="430" width="2.8" height="2.8" fill="#e0208a"/><path d="M92.0 446 L102.5 446 L105.5 449 L102.5 451.5 M91.0 448.5 H102.0 L104.5 451" fill="none" stroke="#888" stroke-width="1"/><path d="M92.5 436.5 L103.5 442 L99.5 442.5 L104.5 448 L94.5 442.5 L98.5 442Z" fill="#3a7fc8"/><path d="M57 458.3 L60.6 461.5 L57 464.7" fill="none" stroke="#555" stroke-width="1.15"/><path d="M78.3 455.2 L86.0 468.5 H70.7Z" fill="#e6e6e6" stroke="#8a8a8a" stroke-width="1.1"/><g stroke="#b4b4b4" stroke-width="0.5" fill="none"><path d="M74.5 461.85 H82.1 M72.6 465.2 H84.0 M74.5 461.85 L78.3 468.5 L82.1 461.85 M72.6 465.2 L74.5 468.5 M84.0 465.2 L82.1 468.5 M76.5 458.5 L80.2 465.2 M80.1 458.5 L76.4 465.2"/></g><path d="M37 476.3 L40.6 479.5 L37 482.7" fill="none" stroke="#555" stroke-width="1.15"/><g fill="none" stroke="#1a8ea6" stroke-width="1.1"><path d="M51.0 479.5 q2 -3.2 4.3 0"/><circle cx="58.8" cy="479.7" r="2.6"/><circle cx="64.0" cy="479.7" r="2.6"/></g><path d="M37 494.3 L40.6 497.5 L37 500.7" fill="none" stroke="#555" stroke-width="1.15"/><g fill="none" stroke="#1a8ea6" stroke-width="1.1"><path d="M51.0 497.5 q2 -3.2 4.3 0"/><circle cx="58.8" cy="497.7" r="2.6"/><circle cx="64.0" cy="497.7" r="2.6"/></g><path d="M36.0 513.3 L39.7 517.1 L43.4 513.3" fill="none" stroke="#222" stroke-width="1.2"/><g fill="#f4f4f4" stroke="#888" stroke-width="0.9"><rect x="53.5" y="508.5" width="8.5" height="10"/><rect x="55.5" y="510.5" width="8.5" height="10"/><rect x="57.5" y="512.5" width="8.5" height="10.5"/></g><rect x="59.0" y="514" width="5.5" height="6" fill="#b24f9f"/><path d="M51.0 520 L53.5 523.5 H66.0" stroke="#888" stroke-width="1.2" fill="none"/><path d="M57 530.3 L60.6 533.5 L57 536.7" fill="none" stroke="#555" stroke-width="1.15"/><rect x="72.5" y="527" width="2.4" height="1" fill="#b24f9f"/><rect x="76.5" y="527" width="2.4" height="1" fill="#b24f9f"/><rect x="80.5" y="527" width="2.4" height="1" fill="#b24f9f"/><rect x="72.5" y="529" width="2.4" height="1" fill="#999"/><rect x="76.5" y="529" width="2.4" height="1" fill="#999"/><rect x="80.5" y="529" width="2.4" height="1" fill="#999"/><rect x="72.5" y="531" width="2.4" height="1" fill="#b24f9f"/><rect x="76.5" y="531" width="2.4" height="1" fill="#b24f9f"/><rect x="80.5" y="531" width="2.4" height="1" fill="#b24f9f"/><rect x="72.5" y="533" width="2.4" height="1" fill="#999"/><rect x="76.5" y="533" width="2.4" height="1" fill="#999"/><rect x="80.5" y="533" width="2.4" height="1" fill="#999"/><rect x="72.5" y="535" width="2.4" height="1" fill="#b24f9f"/><rect x="76.5" y="535" width="2.4" height="1" fill="#b24f9f"/><rect x="80.5" y="535" width="2.4" height="1" fill="#b24f9f"/><rect x="72.5" y="537" width="2.4" height="1" fill="#999"/><rect x="76.5" y="537" width="2.4" height="1" fill="#999"/><rect x="80.5" y="537" width="2.4" height="1" fill="#999"/><rect x="72.5" y="539" width="2.4" height="1" fill="#b24f9f"/><rect x="76.5" y="539" width="2.4" height="1" fill="#b24f9f"/><rect x="80.5" y="539" width="2.4" height="1" fill="#b24f9f"/><path d="M57 548.3 L60.6 551.5 L57 554.7" fill="none" stroke="#555" stroke-width="1.15"/><path d="M77.5 558 V545.5" stroke="#3589cf" stroke-width="1"/><path d="M76.0 547 L77.5 544 L79.0 547z" fill="#3589cf"/><path d="M77.5 558 L71.3 552" stroke="#3aa040" stroke-width="1"/><path d="M77.5 558 L86.0 553" stroke="#e0306a" stroke-width="1"/><text x="70.5" y="569.5" font-family="Liberation Sans" font-size="7.2" fill="#b24f9f">8.85</text><text x="70.5" y="576" font-family="Liberation Sans" font-size="7.2" fill="#b24f9f">e-12</text><path d="M57 584.3 L60.6 587.5 L57 590.7" fill="none" stroke="#555" stroke-width="1.15"/><rect x="72.0" y="581.5" width="12.5" height="12" fill="#f0dcec" stroke="#b24f9f" stroke-width="1"/><path d="M72.0 585.5h12.5M72.0 589.5h12.5M76.2 581.5v12M80.4 581.5v12" stroke="#b24f9f" stroke-width="0.9"/><rect x="71.0" y="598" width="2.8" height="15" fill="#d02030"/><rect x="71.0" y="603" width="2.8" height="4" fill="#f0a020"/><rect x="71.0" y="607" width="2.8" height="3" fill="#3aa040"/><rect x="71.0" y="610" width="2.8" height="3" fill="#3589cf"/><rect x="77.0" y="598" width="2.8" height="15" fill="#f0a020"/><rect x="77.0" y="605" width="2.8" height="4" fill="#e05020"/><rect x="77.0" y="609" width="2.8" height="4" fill="#d0105a"/><rect x="83.0" y="598" width="2.8" height="15" fill="#b0b0b0"/><rect x="83.0" y="606" width="2.8" height="7" fill="#888"/><path d="M57 620.3 L60.6 623.5 L57 626.7" fill="none" stroke="#555" stroke-width="1.15"/><path d="M71.3 617.2 H82.2 L85.8 620.08 V629.8000000000001 H74.89999999999999 L71.3 626.9200000000001Z" fill="#b24f9f"/><path d="M71.8 617.6 L74.89999999999999 620.08 H85.8 M74.89999999999999 620.08 V629.8000000000001" fill="none" stroke="#fff" stroke-width="0.8"/><path d="M57 638.3 L60.6 641.5 L57 644.7" fill="none" stroke="#555" stroke-width="1.15"/><g fill="none" stroke="#b24f9f" stroke-width="0.9"><rect x="74.0" y="635.5" width="12" height="13.5" stroke-dasharray="1.5 1.2"/><path d="M70.5 638v4h5M71.0 640h4.5M70.5 644v3h9"/><rect x="79.0" y="645" width="2.5" height="2.5"/></g><text x="81.0" y="643" font-family="Liberation Sans" font-size="10" fill="#888">*</text><path d="M57 656.3 L60.6 659.5 L57 662.7" fill="none" stroke="#555" stroke-width="1.15"/><path d="M71.3 653.2 H82.2 L85.8 656.08 V665.8000000000001 H74.89999999999999 L71.3 662.9200000000001Z" fill="#b24f9f"/><path d="M71.8 653.6 L74.89999999999999 656.08 H85.8 M74.89999999999999 656.08 V665.8000000000001" fill="none" stroke="#fff" stroke-width="0.8"/><path d="M57 674.3 L60.6 677.5 L57 680.7" fill="none" stroke="#555" stroke-width="1.15"/><path d="M71.3 671.2 H82.2 L85.8 674.08 V683.8000000000001 H74.89999999999999 L71.3 680.9200000000001Z" fill="#b24f9f"/><path d="M71.8 671.6 L74.89999999999999 674.08 H85.8 M74.89999999999999 674.08 V683.8000000000001" fill="none" stroke="#fff" stroke-width="0.8"/><path d="M57 692.3 L60.6 695.5 L57 698.7" fill="none" stroke="#555" stroke-width="1.15"/><path d="M71.0 696.5 C74.5 690.5 77.5 692 78.5 695 S82.5 699 85.5 694" fill="none" stroke="#b24f9f" stroke-width="1.1"/><path d="M57 710.3 L60.6 713.5 L57 716.7" fill="none" stroke="#555" stroke-width="1.15"/><path d="M71.0 714.5 C74.5 708.5 77.5 710 78.5 713 S82.5 717 85.5 712" fill="none" stroke="#b24f9f" stroke-width="1.1"/><path d="M57 728.3 L60.6 731.5 L57 734.7" fill="none" stroke="#555" stroke-width="1.15"/><path d="M71.3 725.2 H82.2 L85.8 728.08 V737.8000000000001 H74.89999999999999 L71.3 734.9200000000001Z" fill="#b24f9f"/><path d="M71.8 725.6 L74.89999999999999 728.08 H85.8 M74.89999999999999 728.08 V737.8000000000001" fill="none" stroke="#fff" stroke-width="0.8"/><path d="M57 746.3 L60.6 749.5 L57 752.7" fill="none" stroke="#555" stroke-width="1.15"/><g fill="none" stroke="#b24f9f" stroke-width="0.9"><rect x="74.0" y="743.5" width="12" height="13.5" stroke-dasharray="1.5 1.2"/><path d="M70.5 746v4h5M71.0 748h4.5M70.5 752v3h9"/><rect x="79.0" y="753" width="2.5" height="2.5"/></g><text x="81.0" y="751" font-family="Liberation Sans" font-size="10" fill="#888">*</text><path d="M57 764.3 L60.6 767.5 L57 770.7" fill="none" stroke="#555" stroke-width="1.15"/><path d="M71.3 761.2 H82.2 L85.8 764.08 V773.8000000000001 H74.89999999999999 L71.3 770.9200000000001Z" fill="#b24f9f"/><path d="M71.8 761.6 L74.89999999999999 764.08 H85.8 M74.89999999999999 764.08 V773.8000000000001" fill="none" stroke="#fff" stroke-width="0.8"/><path d="M57 782.3 L60.6 785.5 L57 788.7" fill="none" stroke="#555" stroke-width="1.15"/><path d="M71.3 779.2 H82.2 L85.8 782.08 V791.8000000000001 H74.89999999999999 L71.3 788.9200000000001Z" fill="#b24f9f"/><path d="M71.8 779.6 L74.89999999999999 782.08 H85.8 M74.89999999999999 782.08 V791.8000000000001" fill="none" stroke="#fff" stroke-width="0.8"/><path d="M57 800.3 L60.6 803.5 L57 806.7" fill="none" stroke="#555" stroke-width="1.15"/><path d="M71.0 804.5 C74.5 798.5 77.5 800 78.5 803 S82.5 807 85.5 802" fill="none" stroke="#b24f9f" stroke-width="1.1"/><path d="M71.0 817 L73.5 814.5 H83.5 L86.0 817 V827 H73.5 L71.0 824.5Z" fill="#b24f9f"/><rect x="75.5" y="819.5" width="8" height="5" fill="none" stroke="#fff" stroke-width="0.8"/><path d="M73.5 817h12.5M73.5 817v10" stroke="#fff" stroke-width="0.7"/><rect x="73.0" y="833.5" width="10.5" height="14" fill="#fff" stroke="#b24f9f" stroke-width="1"/><path d="M75.0 837h4M75.0 839.5h3M75.0 842h2" stroke="#777" stroke-width="0.8"/><path d="M75.5 845.5 L85.0 834.5" stroke="#b24f9f" stroke-width="2.2"/><path d="M284.3 186.8 H292.3 L288.3 191Z" fill="#a0a0a0"/><rect x="298.8" y="185.5" width="8" height="6.5" fill="none" stroke="#a0a0a0" stroke-width="1.1"/><rect x="298.8" y="185.2" width="8" height="1.4" fill="#a0a0a0"/><rect x="314.3" y="184.5" width="5.5" height="6" fill="#a0a0a0"/><path d="M313.3 190.8h7.5M317.05 190.8v4" stroke="#a0a0a0" stroke-width="1.2"/><path d="M626.8 186.8 H634.8 L630.8 191Z" fill="#a6c6e6"/><rect x="641.3" y="185.5" width="8" height="6.5" fill="none" stroke="#a6c6e6" stroke-width="1.1"/><rect x="641.3" y="185.2" width="8" height="1.4" fill="#a6c6e6"/><rect x="656.8" y="184.5" width="5.5" height="6" fill="#a6c6e6"/><path d="M655.8 190.8h7.5M659.55 190.8v4" stroke="#a6c6e6" stroke-width="1.2"/><path d="M1551 181.8 H1559 L1555 186Z" fill="#a0a0a0"/><rect x="1565.5" y="180.5" width="8" height="6.5" fill="none" stroke="#a0a0a0" stroke-width="1.1"/><rect x="1565.5" y="180.2" width="8" height="1.4" fill="#a0a0a0"/><rect x="1581" y="179.5" width="5.5" height="6" fill="#a0a0a0"/><path d="M1580 185.8h7.5M1583.75 185.8v4" stroke="#a0a0a0" stroke-width="1.2"/><path d="M1551 788.8 H1559 L1555 793Z" fill="#a0a0a0"/><rect x="1565.5" y="787.5" width="8" height="6.5" fill="none" stroke="#a0a0a0" stroke-width="1.1"/><rect x="1565.5" y="787.2" width="8" height="1.4" fill="#a0a0a0"/><rect x="1581" y="786.5" width="5.5" height="6" fill="#a0a0a0"/><path d="M1580 792.8h7.5M1583.75 792.8v4" stroke="#a0a0a0" stroke-width="1.2"/><path d="M13 213.5h12.5" stroke="#3589cf" stroke-width="1.5"/><path d="M12 213.5 l5 -3.5v7z" fill="#3589cf"/><path d="M34.5 213.5h12" stroke="#999" stroke-width="1.3"/><path d="M49 213.5 l-5 -3.3v6.6z" fill="#999"/><path d="M64.5 209v12" stroke="#999" stroke-width="1.2"/><path d="M64.5 207 l-3.3 5h6.6z" fill="#999"/><path d="M87.5 206v12" stroke="#999" stroke-width="1.2"/><path d="M87.5 220.5 l-3.3 -5h6.6z" fill="#999"/><path d="M104 208.3h2M107 208.3h10" stroke="#3589cf" stroke-width="1.4"/><ellipse cx="110.5" cy="214.5" rx="5.5" ry="2.8" fill="none" stroke="#3589cf" stroke-width="1.3"/><circle cx="110.5" cy="214.5" r="1.4" fill="#3589cf"/><path d="M126 207.5h1M128 207.5h8" stroke="#3589cf" stroke-width="1"/><path d="M126 210.1h1M128 210.1h8" stroke="#3589cf" stroke-width="1"/><path d="M126 212.7h1M128 212.7h8" stroke="#3589cf" stroke-width="1"/><path d="M126 215.3h1M128 215.3h8" stroke="#3589cf" stroke-width="1"/><path d="M126 217.9h1M128 217.9h8" stroke="#3589cf" stroke-width="1"/><path d="M126 220.5h1M128 220.5h8" stroke="#3589cf" stroke-width="1"/><path d="M140 209v11" stroke="#3589cf" stroke-width="1.3"/><path d="M140 206.5 l-2.6 4h5.2z" fill="#3589cf"/><path d="M148 211.5 L155 211.5 L151.5 215.5Z" fill="#222"/><path d="M167 207.5h1M169 207.5h8" stroke="#3589cf" stroke-width="1"/><path d="M167 210.1h1M169 210.1h8" stroke="#3589cf" stroke-width="1"/><path d="M167 212.7h1M169 212.7h8" stroke="#3589cf" stroke-width="1"/><path d="M167 215.3h1M169 215.3h8" stroke="#3589cf" stroke-width="1"/><path d="M167 217.9h1M169 217.9h8" stroke="#3589cf" stroke-width="1"/><path d="M167 220.5h1M169 220.5h8" stroke="#3589cf" stroke-width="1"/><path d="M181 207v11" stroke="#3589cf" stroke-width="1.3"/><path d="M181 221 l-2.6 -4h5.2z" fill="#3589cf"/><path d="M189 211.5 L196 211.5 L192.5 215.5Z" fill="#222"/><path d="M209.5 207.5h8M218.5 207.5h2" stroke="#888" stroke-width="1"/><path d="M209.5 210.1h8M218.5 210.1h2" stroke="#888" stroke-width="1"/><path d="M209.5 212.7h8M218.5 212.7h2" stroke="#888" stroke-width="1"/><path d="M209.5 215.3h8M218.5 215.3h2" stroke="#888" stroke-width="1"/><path d="M209.5 217.9h8M218.5 217.9h2" stroke="#888" stroke-width="1"/><path d="M209.5 220.5h8M218.5 220.5h2" stroke="#888" stroke-width="1"/><path d="M229 211.5 L236 211.5 L232.5 215.5Z" fill="#222"/><rect x="251" y="207" width="9" height="5" fill="#3589cf"/><path d="M247 212.3h17 l-6.5 4.5 h-4z" fill="#888"/><path d="M255.5 216.5v5" stroke="#3589cf" stroke-width="1.5"/><path d="M269 211.5 L276 211.5 L272.5 215.5Z" fill="#222"/><path d="M314.5 241 A6 6 0 1 1 313.8 235" fill="none" stroke="#3589cf" stroke-width="1.5"/><path d="M316.5 232 L316.5 238.5 L310.5 236.5Z" fill="#3589cf"/><rect x="643" y="236.3" width="19.3" height="21" rx="2" fill="#ececec" stroke="#d0d0d0" stroke-width="1"/><rect x="646" y="239.5" width="13.5" height="13.5" rx="1" fill="#fff" stroke="#777" stroke-width="1"/><rect x="646" y="239.5" width="13.5" height="2.6" fill="#999"/><path d="M649.5 245h8M649.5 247.5h8" stroke="#1aa080" stroke-width="1"/><path d="M645.5 254.5 L649 251" stroke="#1aa080" stroke-width="1.5"/><path d="M650 250 h-3.3 l3.3 3.3z" fill="#1aa080"/><path d="M340 302.2 L343.6 305.5 L340 308.8" fill="none" stroke="#111" stroke-width="1.4"/><path d="M340 331.2 L343.6 334.5 L340 337.8" fill="none" stroke="#111" stroke-width="1.4"/><path d="M339.3 361.8 L342.7 365.59999999999997 L346.1 361.8" fill="none" stroke="#2e5fa8" stroke-width="1.2"/><path d="M339.3 498.8 L342.7 502.59999999999997 L346.1 498.8" fill="none" stroke="#2e5fa8" stroke-width="1.2"/><path d="M619.8 414.7 L627.0 414.7 L623.4 419.3Z" fill="#111"/><path d="M619.8 462.7 L627.0 462.7 L623.4 467.3Z" fill="#111"/><path d="M648.5 551.7 L655.7 551.7 L652.1 556.3000000000001Z" fill="#111"/><path d="M649 407.4h6" stroke="#777" stroke-width="0.9"/><path d="M649 412.9h6" stroke="#777" stroke-width="0.9"/><path d="M649 415.6h6" stroke="#777" stroke-width="0.9"/><path d="M649 418.4h6" stroke="#777" stroke-width="0.9"/><path d="M649 421.1h6" stroke="#777" stroke-width="0.9"/><path d="M649 411.4h6" stroke="#3589cf" stroke-width="1.6"/><path d="M657 412.2h3.3v9h-5" fill="none" stroke="#3589cf" stroke-width="1.1"/><path d="M654.5 412.2 l3 -2.5v5z" fill="#3589cf"/><path d="M649 455.4h6" stroke="#777" stroke-width="0.9"/><path d="M649 460.9h6" stroke="#777" stroke-width="0.9"/><path d="M649 463.6h6" stroke="#777" stroke-width="0.9"/><path d="M649 466.4h6" stroke="#777" stroke-width="0.9"/><path d="M649 469.1h6" stroke="#777" stroke-width="0.9"/><path d="M649 459.4h6" stroke="#3589cf" stroke-width="1.6"/><path d="M657 460.2h3.3v9h-5" fill="none" stroke="#3589cf" stroke-width="1.1"/><path d="M654.5 460.2 l3 -2.5v5z" fill="#3589cf"/><path d="M852 181.5 L859 188.5 M859 181.5 L852 188.5" stroke="#b0b0b0" stroke-width="1.1"/><path d="M755 788.5 L762 795.5 M762 788.5 L755 795.5" stroke="#b0b0b0" stroke-width="1.1"/><path d="M686 813 L689.5 821" stroke="#666" stroke-width="1.1"/><path d="M687.5 820 L692 819 L696 827 L689 828.5Z" fill="#f0b040"/><rect x="705.5" y="813.5" width="10" height="8.5" fill="#fff" stroke="#3589cf" stroke-width="1.1"/><rect x="709.5" y="817.5" width="10" height="9" fill="#fff" stroke="#3589cf" stroke-width="1.1"/><path d="M709.5 817.5 L714.5 822 L719.5 817.5" fill="none" stroke="#3589cf" stroke-width="0.9"/><circle cx="688.5" cy="211.5" r="4.6" fill="none" stroke="#3589cf" stroke-width="1.6"/><path d="M691.8 214.8 L695.8 218.8" stroke="#3589cf" stroke-width="2.3"/><path d="M686.0 211.5h5" stroke="#3589cf" stroke-width="1.3"/><path d="M688.5 209.0v5" stroke="#3589cf" stroke-width="1.3"/><circle cx="711.5" cy="211.5" r="4.6" fill="none" stroke="#3589cf" stroke-width="1.6"/><path d="M714.8 214.8 L718.8 218.8" stroke="#3589cf" stroke-width="2.3"/><path d="M709.0 211.5h5" stroke="#3589cf" stroke-width="1.3"/><rect x="728" y="212" width="6.5" height="6.5" fill="none" stroke="#3589cf" stroke-width="1" stroke-dasharray="1.5 1"/><circle cx="737" cy="211" r="4.6" fill="none" stroke="#3589cf" stroke-width="1.6"/><path d="M740.3 214.3 L744.3 218.3" stroke="#3589cf" stroke-width="2.3"/><path d="M734.5 211h5" stroke="#3589cf" stroke-width="1.3"/><path d="M737 208.5v5" stroke="#3589cf" stroke-width="1.3"/><path d="M750.6 211.5 L756.9 211.5 L753.75 214.7Z" fill="#222"/><rect x="769.8" y="205.8" width="13.3" height="13.3" fill="none" stroke="#777" stroke-width="1.1"/><path d="M776.4 208v9M772 212.5h9" stroke="#3589cf" stroke-width="1"/><path d="M776.4 207 l-2 2.3h4z M776.4 218 l-2 -2.3h4z M771 212.5 l2.3 -2h0v4z M782 212.5 l-2.3 -2v4z" fill="#3589cf"/><path d="M792.4 206v14" stroke="#d0d0d0" stroke-width="1"/><path d="M910.6 206v14" stroke="#d0d0d0" stroke-width="1"/><path d="M958.8 206v14" stroke="#d0d0d0" stroke-width="1"/><path d="M1081.7 206v14" stroke="#d0d0d0" stroke-width="1"/><path d="M1112.3 206v14" stroke="#d0d0d0" stroke-width="1"/><path d="M1160.6 206v14" stroke="#d0d0d0" stroke-width="1"/><path d="M807.5 218.5 V206.5" stroke="#3589cf" stroke-width="1.1"/><path d="M805.8 208 l1.7 -2.5 l1.7 2.5z" fill="#3589cf"/><path d="M807.5 218.5 L800 211.5" stroke="#3aa040" stroke-width="1.1"/><path d="M807.5 218.5 L816 213" stroke="#e0306a" stroke-width="1.1"/><path d="M822.6 211.5 L828.8000000000001 211.5 L825.7 214.7Z" fill="#222"/><path d="M843 218.5 V206.5" stroke="#3aa040" stroke-width="1.1"/><path d="M843 218.5 H855.5" stroke="#e0306a" stroke-width="1.1"/><text x="845.2" y="214.5" font-family="Liberation Sans" font-size="9.5" fill="#aaa">xy</text><path d="M865.4 218.5 V206.5" stroke="#3589cf" stroke-width="1.1"/><path d="M865.4 218.5 H877.9" stroke="#3aa040" stroke-width="1.1"/><text x="867.6" y="214.5" font-family="Liberation Sans" font-size="9.5" fill="#aaa">yz</text><path d="M888.5 218.5 V206.5" stroke="#3589cf" stroke-width="1.1"/><path d="M888.5 218.5 H901.0" stroke="#e0306a" stroke-width="1.1"/><text x="890.7" y="214.5" font-family="Liberation Sans" font-size="9.5" fill="#aaa">xz</text><path d="M929.5 209 A5.5 5.5 0 1 1 921.5 211.5" fill="none" stroke="#3589cf" stroke-width="1.6"/><path d="M924 205.5 L930 209.5 L924 212.5Z" fill="#3589cf"/><path d="M939 211.5 L945 211.5 L942.0 214.7Z" fill="#222"/><rect x="964.4" y="204" width="18.8" height="18.5" rx="2" fill="#cfe5f8" stroke="#a8cef0" stroke-width="1"/><rect x="1033.5" y="204" width="18.8" height="18.5" rx="2" fill="#cfe5f8" stroke="#a8cef0" stroke-width="1"/><rect x="1056.4" y="204" width="18.8" height="18.5" rx="2" fill="#cfe5f8" stroke="#a8cef0" stroke-width="1"/><path d="M968 210.5 h4 l6 -4 v13 l-6 -4 h-4z" fill="#3589cf"/><path d="M978 210 a3 3 0 0 1 0 6" fill="none" stroke="#3589cf" stroke-width="1"/><path d="M990.5 207.5 h10 l3 3 v8.5 h-10 l-3 -3z" fill="#cde0f4" stroke="#3589cf" stroke-width="1.1"/><path d="M990.5 207.5 l3 3 h10 M993.5 210.5 v8.5" fill="none" stroke="#3589cf" stroke-width="1"/><rect x="1012.5" y="205.7" width="14.5" height="14" fill="#fff" stroke="#777" stroke-width="1.1"/><g fill="#3589cf"><rect x="1015.0" y="208.2" width="2.5" height="2.5"/><rect x="1018.3" y="208.2" width="2.5" height="2.5"/><rect x="1021.6" y="208.2" width="2.5" height="2.5"/><rect x="1015.0" y="211.5" width="2.5" height="2.5"/><rect x="1018.3" y="211.5" width="2.5" height="2.5"/><rect x="1021.6" y="211.5" width="2.5" height="2.5"/><rect x="1015.0" y="214.8" width="2.5" height="2.5"/><rect x="1018.3" y="214.8" width="2.5" height="2.5"/><rect x="1021.6" y="214.8" width="2.5" height="2.5"/></g><rect x="1036.5" y="206.5" width="13" height="13.5" fill="none" stroke="#777" stroke-width="1.1"/><path d="M1043 216.5 V209" stroke="#3589cf" stroke-width="1"/><path d="M1043 216.5 L1038.5 213" stroke="#3aa040" stroke-width="1"/><path d="M1043 216.5 L1048 213.5" stroke="#e0306a" stroke-width="1"/><rect x="1059.5" y="206.5" width="13" height="13.5" fill="none" stroke="#777" stroke-width="1.1"/><defs><linearGradient id="cbg" x1="0" y1="0" x2="0" y2="1"><stop offset="0" stop-color="#e02020"/><stop offset="0.5" stop-color="#f0a020"/><stop offset="1" stop-color="#3080e0"/></linearGradient></defs><rect x="1066" y="208" width="2.8" height="10.5" fill="url(#cbg)"/><path d="M1094 210.5 v-2 a3.2 3.2 0 0 1 6.4 0 v2" fill="none" stroke="#3589cf" stroke-width="1.4"/><rect x="1092" y="210.5" width="10.4" height="8.3" rx="1" fill="#3589cf"/><path d="M1127.5 205.5 a7.5 7.5 0 1 0 0 15 c-2 -1 -1.5 -3.5 1 -3.5 a7.5 7.5 0 0 0 -1 -11.5z" fill="#ececec" stroke="#777" stroke-width="1.1"/><circle cx="1124" cy="216" r="1.2" fill="#e03030"/><circle cx="1127.5" cy="213.5" r="1.2" fill="#f0a020"/><circle cx="1131" cy="211" r="1.2" fill="#3080e0"/><circle cx="1130" cy="208" r="1" fill="#3aa040"/><path d="M1140.8 211.5 L1148.3 211.5 L1144.55 215.1Z" fill="#222"/><circle cx="1176" cy="212.5" r="6.5" fill="none" stroke="#3589cf" stroke-width="3"/><g stroke="#fafbfd" stroke-width="1.2"><path d="M1172 206 L1178 211 M1183 209 L1177 214 M1180 219 L1174 214 M1169 216 L1175 211"/></g><path d="M1189.7 211.5 L1197.2 211.5 L1193.45 215.1Z" fill="#222"/><path d="M1208.5 208.5 h4 l1.5 -2 h5 l1.5 2 h4.5 v10.5 h-16.5z" fill="#3589cf"/><circle cx="1216.8" cy="213.8" r="3.3" fill="#fff"/><circle cx="1216.8" cy="213.8" r="2" fill="#3589cf"/><rect x="1236" y="205.5" width="8.5" height="4.5" fill="#fff" stroke="#3589cf" stroke-width="1.2"/><rect x="1233" y="210" width="14" height="7" rx="1.5" fill="#3589cf"/><rect x="1236" y="215" width="8.5" height="5.5" fill="#fff" stroke="#3589cf" stroke-width="1.2"/><path d="M1566 238 L1583 231 L1587 245 L1572 250Z" fill="#ececec" opacity="0.8"/><rect x="1570" y="235" width="14" height="10.5" rx="3" fill="url(#appb)"/><path d="M1571.5 236.8 L1578.5 240.2 L1571.5 243.6Z" fill="#f0e040"/><defs><linearGradient id="leg" x1="0" y1="0" x2="0" y2="1"><stop offset="0" stop-color="#660070"/><stop offset="0.0377" stop-color="#740065"/><stop offset="0.151" stop-color="#c00038"/><stop offset="0.2" stop-color="#e01020"/><stop offset="0.265" stop-color="#ff5a10"/><stop offset="0.33" stop-color="#ffa000"/><stop offset="0.379" stop-color="#f0d020"/><stop offset="0.44" stop-color="#c0e830"/><stop offset="0.493" stop-color="#80e850"/><stop offset="0.55" stop-color="#40e8a0"/><stop offset="0.606" stop-color="#20e0e0"/><stop offset="0.66" stop-color="#30b8f0"/><stop offset="0.72" stop-color="#4a90ec"/><stop offset="0.78" stop-color="#8080f0"/><stop offset="0.834" stop-color="#a898f0"/><stop offset="0.9" stop-color="#cbc2ee"/><stop offset="0.948" stop-color="#ddd6f0"/><stop offset="1" stop-color="#ece8f4"/></linearGradient></defs><rect x="1521" y="295.8" width="14.5" height="437.4" fill="url(#leg)" stroke="#555" stroke-width="1"/><path d="M1521 312.3h3.2M1532.3 312.3h3.2" stroke="#333" stroke-width="1"/><text x="1544.5" y="316.9" font-family="Liberation Sans" font-size="12.8" fill="#111">16</text><path d="M1521 362.1h3.2M1532.3 362.1h3.2" stroke="#333" stroke-width="1"/><text x="1544.5" y="366.7" font-family="Liberation Sans" font-size="12.8" fill="#111">14</text><path d="M1521 411.8h3.2M1532.3 411.8h3.2" stroke="#333" stroke-width="1"/><text x="1544.5" y="416.4" font-family="Liberation Sans" font-size="12.8" fill="#111">12</text><path d="M1521 461.6h3.2M1532.3 461.6h3.2" stroke="#333" stroke-width="1"/><text x="1544.5" y="466.2" font-family="Liberation Sans" font-size="12.8" fill="#111">10</text><path d="M1521 511.3h3.2M1532.3 511.3h3.2" stroke="#333" stroke-width="1"/><text x="1544.5" y="515.9" font-family="Liberation Sans" font-size="12.8" fill="#111">8</text><path d="M1521 561.0h3.2M1532.3 561.0h3.2" stroke="#333" stroke-width="1"/><text x="1544.5" y="565.6" font-family="Liberation Sans" font-size="12.8" fill="#111">6</text><path d="M1521 610.8h3.2M1532.3 610.8h3.2" stroke="#333" stroke-width="1"/><text x="1544.5" y="615.4" font-family="Liberation Sans" font-size="12.8" fill="#111">4</text><path d="M1521 660.5h3.2M1532.3 660.5h3.2" stroke="#333" stroke-width="1"/><text x="1544.5" y="665.1" font-family="Liberation Sans" font-size="12.8" fill="#111">2</text><path d="M1521 710.3h3.2M1532.3 710.3h3.2" stroke="#333" stroke-width="1"/><text x="1544.5" y="714.9" font-family="Liberation Sans" font-size="12.8" fill="#111">0</text><text x="1537.5" y="284.6" font-family="Liberation Sans" font-size="13" fill="#111">×10</text><text x="1561" y="277" font-family="Liberation Sans" font-size="10" fill="#111">-3</text><path d="M719 725.8 L703.5 713.8" stroke="#e0306a" stroke-width="1.5"/><path d="M701.4 712.2 L708.5 714.5 L704.5 718.5Z" fill="#e0306a"/><path d="M719 725.8 L739.5 719" stroke="#3aa040" stroke-width="1.5"/><path d="M742.8 718 L735.5 716 L736.5 722Z" fill="#3aa040"/><path d="M719 725.8 L716.9 747" stroke="#3a80c8" stroke-width="1.5"/><path d="M716.6 750.4 L713.6 743 L719.6 743.3Z" fill="#3a80c8"/><text x="694" y="711.3" font-family="Liberation Sans" font-size="12.5" fill="#111">x</text><text x="747" y="718.5" font-family="Liberation Sans" font-size="12.5" fill="#111">y</text><text x="713" y="760.6" font-family="Liberation Sans" font-size="12.5" fill="#111">z</text><text x="338.5" y="588.2" font-family="Liberation Sans" font-size="15" fill="#111" font-style="italic">σ</text><text x="348.5" y="592.3" font-family="Liberation Sans" font-size="9.6" fill="#111" >EM</text><path d="M366.7 581.3h9.5M366.7 586.6h9.5" stroke="#111" stroke-width="1.3"/><text x="379.8" y="588.2" font-family="Liberation Sans" font-size="14.6" fill="#111" font-weight="bold">D</text><text x="389.4" y="591.8" font-family="Liberation Sans" font-size="9.3" fill="#111" >s</text><circle cx="406" cy="583.2" r="5.7" fill="none" stroke="#111" stroke-width="1.1"/><path d="M402 579.2 L410 587.2 M410 579.2 L402 587.2" stroke="#111" stroke-width="1.1"/><text x="414.8" y="588.2" font-family="Liberation Sans" font-size="14.6" fill="#111" font-weight="bold" transform="translate(414.8 0) scale(0.85 1) translate(-414.8 0)">E</text><text x="422.6" y="591.8" font-family="Liberation Sans" font-size="9.3" fill="#111" >s</text><path d="M432.7 582.8h10" stroke="#111" stroke-width="1.2"/><text x="447.3" y="580.5" font-family="Liberation Sans" font-size="11.5" fill="#111" >1</text><path d="M447 583.4h9.5" stroke="#111" stroke-width="1"/><text x="448" y="596.5" font-family="Liberation Sans" font-size="11.5" fill="#111" >2</text><text x="458.6" y="589.6" font-family="Liberation Sans" font-size="19" fill="#111" >(</text><text x="465.4" y="588.2" font-family="Liberation Sans" font-size="14.6" fill="#111" font-weight="bold">D</text><text x="475" y="591.8" font-family="Liberation Sans" font-size="9.3" fill="#111" >s</text><circle cx="485.3" cy="584" r="0.9" fill="#111"/><text x="491.3" y="588.2" font-family="Liberation Sans" font-size="14.6" fill="#111" font-weight="bold" transform="translate(491.3 0) scale(0.85 1) translate(-491.3 0)">E</text><text x="499.3" y="591.8" font-family="Liberation Sans" font-size="9.3" fill="#111" >s</text><text x="503.4" y="589.6" font-family="Liberation Sans" font-size="19" fill="#111" >)</text><path d="M512.7 578v10.2" stroke="#111" stroke-width="1.2"/><path d="M216 127.5 L218.6 130.5 L221.2 127.5" fill="none" stroke="#333" stroke-width="1.3"/><path d="M331.8 127.5 L334.40000000000003 130.5 L337.0 127.5" fill="none" stroke="#333" stroke-width="1.3"/></svg>
</body></html>
